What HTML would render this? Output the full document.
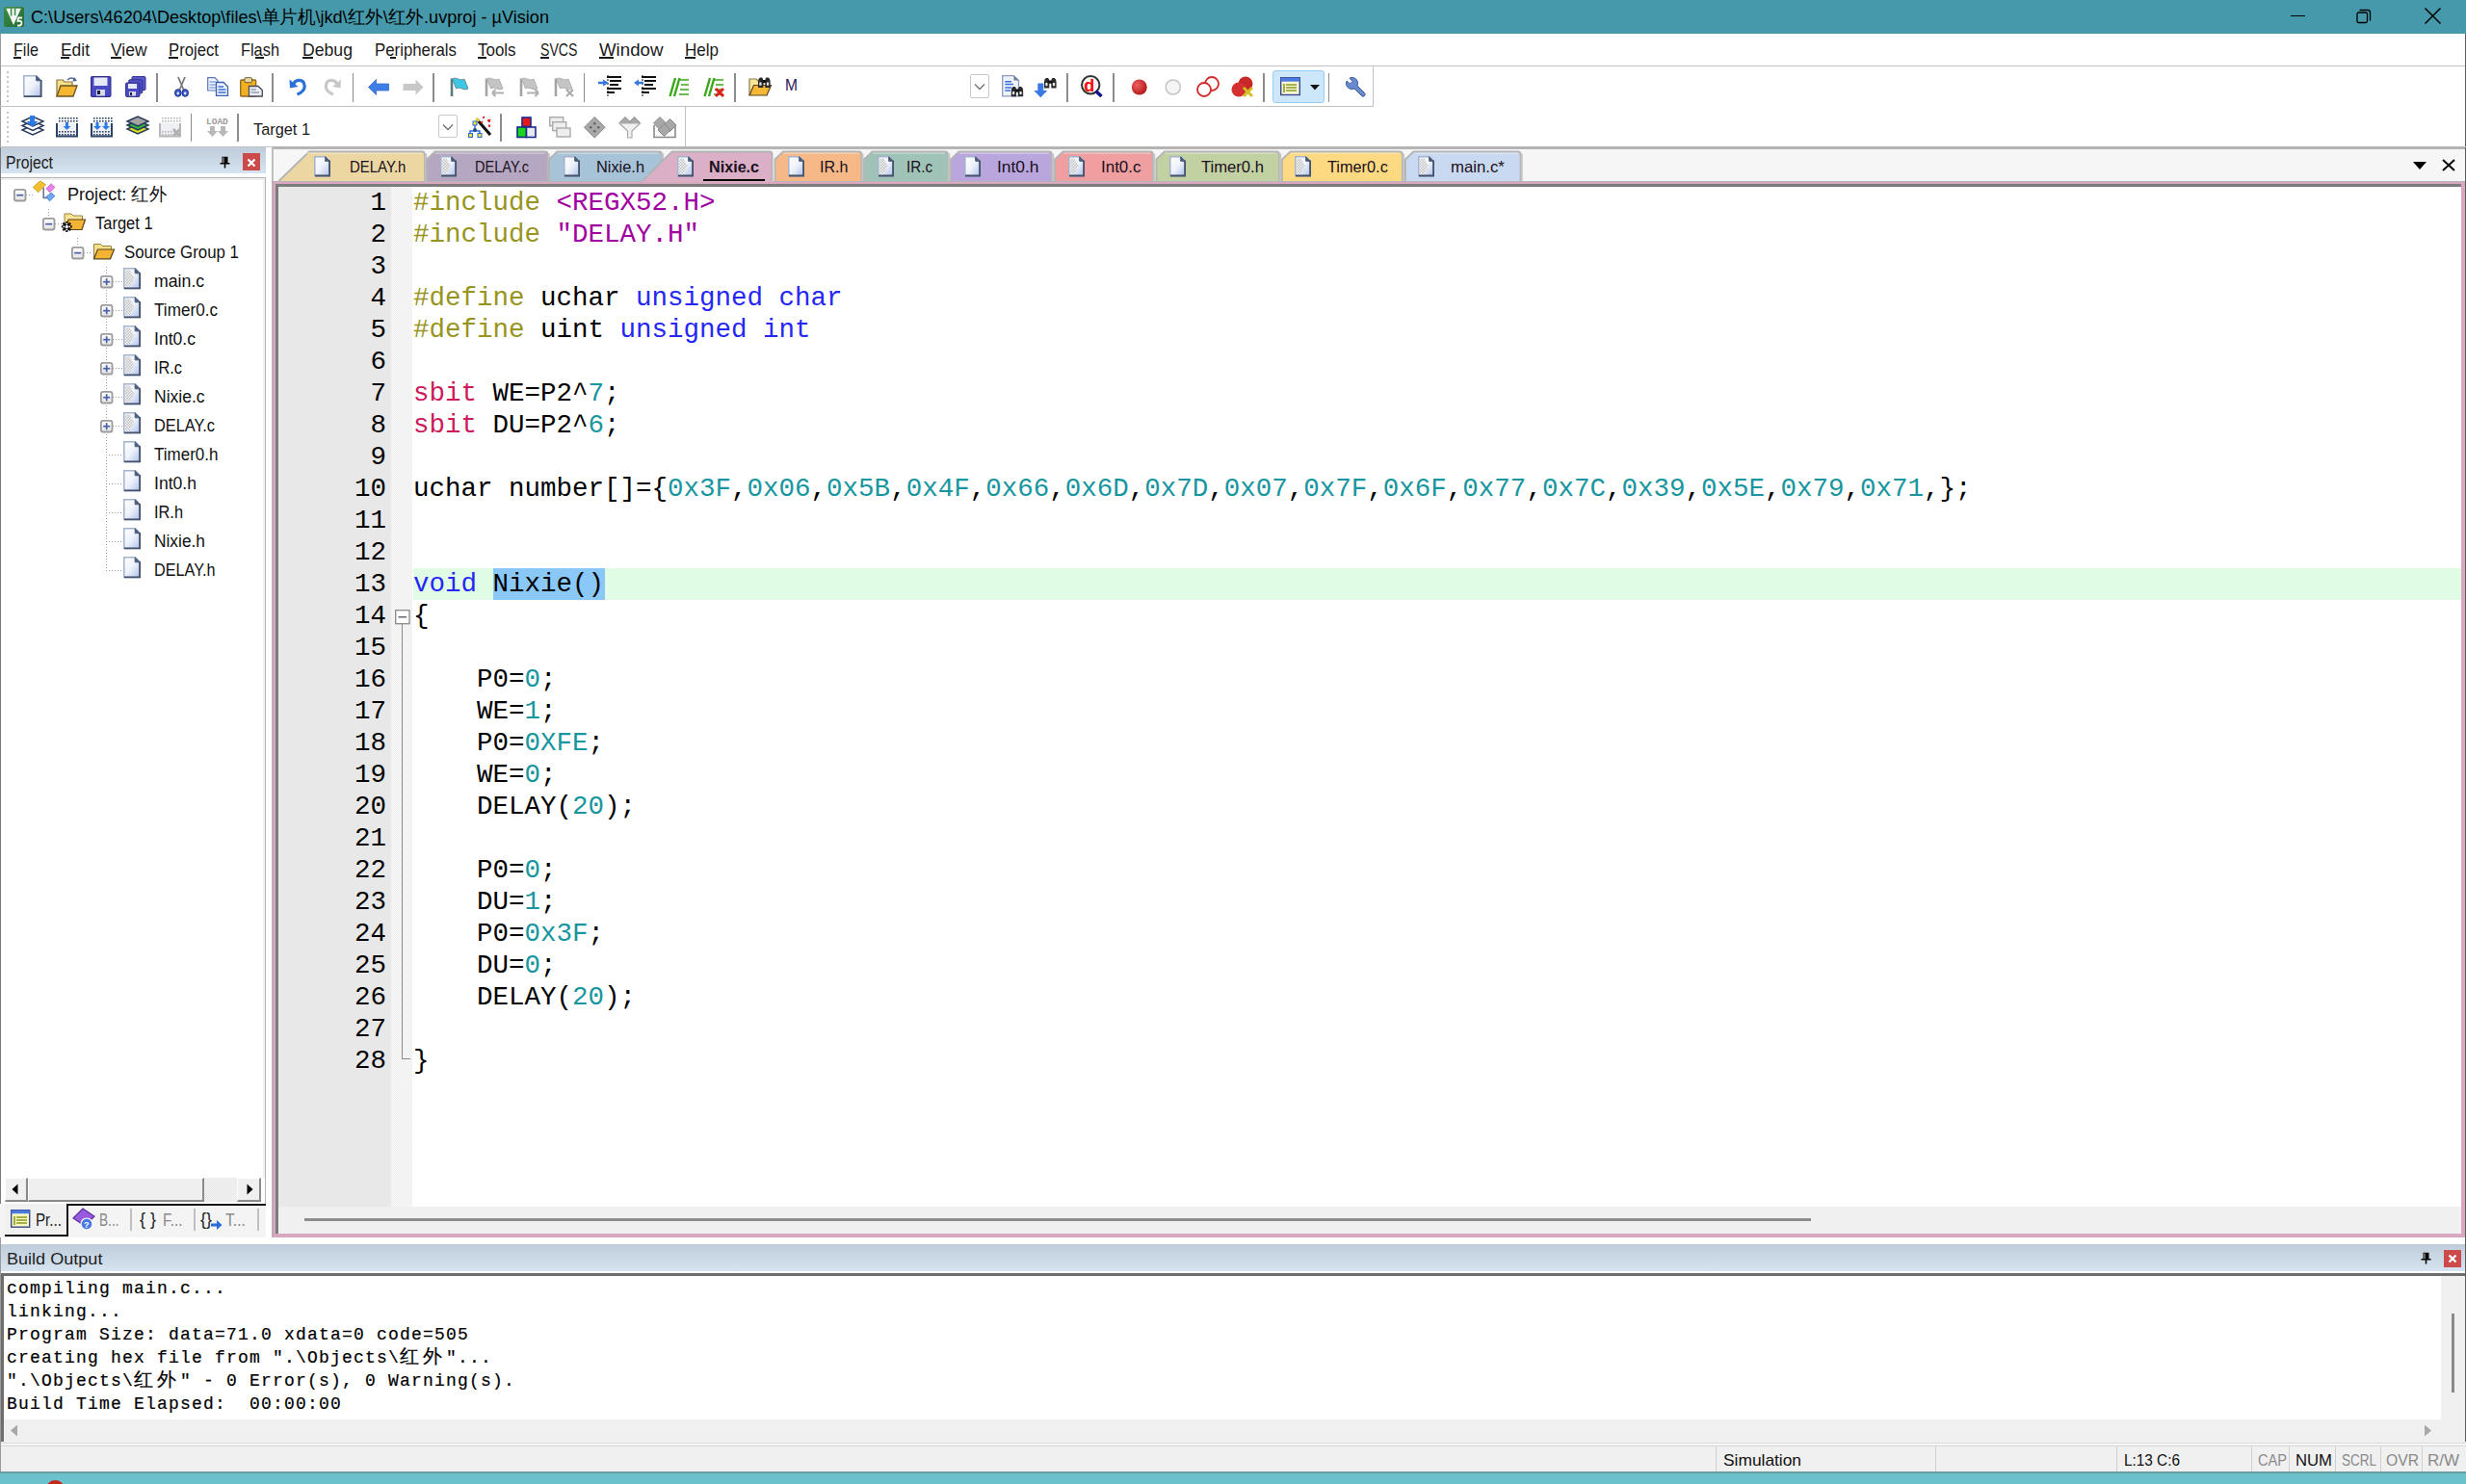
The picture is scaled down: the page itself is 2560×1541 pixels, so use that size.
<!DOCTYPE html><html><head><meta charset="utf-8"><style>
*{margin:0;padding:0;box-sizing:border-box}
html,body{width:2560px;height:1541px;overflow:hidden;background:#fff;font-family:"Liberation Sans",sans-serif;color:#000}
div,span,svg{position:absolute;display:block}
.t{white-space:nowrap}
.code{font-family:"Liberation Mono",monospace;font-size:27.5px;line-height:33px;white-space:pre}
.code div{position:absolute}
.ln{left:0;width:112px;text-align:right}
.cl{left:140px}
.code span{position:static;display:inline}
.kw{color:#2626f6}.pp{color:#989420}.st{color:#a000a0}.nu{color:#1896a0}.sb{color:#cc1a5c}
.bo{font-family:"Liberation Mono",monospace;font-size:18px;letter-spacing:1.2px;-webkit-text-stroke:0.2px #000;line-height:24px;white-space:pre;color:#000}
</style></head><body>
<div style="left:0px;top:0px;width:2560px;height:35px;background:#4599ab;"></div>
<svg style="left:3.6px;top:6.5px;overflow:visible" width="21" height="21" viewBox="0 0 21 21"><defs><linearGradient id="gapp" x1="0" y1="0" x2="1" y2="1"><stop offset="0" stop-color="#3e8c4a"/><stop offset="1" stop-color="#236c30"/></linearGradient></defs><rect x="0" y="0" width="21" height="21" rx="2" fill="url(#gapp)"/><path d="M2.3,1.8 H17.8 L10,19 Z" fill="#f4f8f4"/><path d="M7.6,1.5 V9.5 M11.6,1.5 V9" stroke="#3f8c4c" stroke-width="1.6"/><path d="M14.5,11.5 H19 M14.8,11.5 L14.5,15 Q18.5,14 18.5,17 Q18.5,20 14,19.5" fill="none" stroke="#fff" stroke-width="1.8"/></svg>
<span id="f0" class="t" style="left:32px;top:7px;font-size:18.5px;line-height:22px;color:#000;font-weight:normal;font-family:'Liberation Sans',sans-serif;transform:scaleX(0.9791);transform-origin:0 0;">C:\Users\46204\Desktop\files\单片机\jkd\红外\红外.uvproj - µVision</span>
<div style="left:2378px;top:16px;width:15px;height:1.3px;background:#000;"></div>
<svg style="left:2446px;top:9px;overflow:visible" width="16" height="16" viewBox="0 0 16 16"><path d="M3.5,1.5 H12 a2.5,2.5 0 0 1 2.5,2.5 V12.5" fill="none" stroke="#000" stroke-width="1.3"/><rect x="1" y="4" width="10.5" height="10.5" rx="1.5" fill="none" stroke="#000" stroke-width="1.3"/></svg>
<svg style="left:2516px;top:7px;overflow:visible" width="19" height="19" viewBox="0 0 19 19"><path d="M1.5,1.5 L17.5,17.5 M17.5,1.5 L1.5,17.5" stroke="#000" stroke-width="1.5"/></svg>
<span id="f1" class="t" style="left:14px;top:42px;font-size:18.5px;line-height:20px;color:#1a1a1a;font-weight:normal;font-family:'Liberation Sans',sans-serif;transform:scaleX(0.8721);transform-origin:0 0;">File</span>
<span id="f2" class="t" style="left:63px;top:42px;font-size:18.5px;line-height:20px;color:#1a1a1a;font-weight:normal;font-family:'Liberation Sans',sans-serif;transform:scaleX(0.9407);transform-origin:0 0;">Edit</span>
<span id="f3" class="t" style="left:115px;top:42px;font-size:18.5px;line-height:20px;color:#1a1a1a;font-weight:normal;font-family:'Liberation Sans',sans-serif;transform:scaleX(0.9430);transform-origin:0 0;">View</span>
<span id="f4" class="t" style="left:175px;top:42px;font-size:18.5px;line-height:20px;color:#1a1a1a;font-weight:normal;font-family:'Liberation Sans',sans-serif;transform:scaleX(0.9031);transform-origin:0 0;">Project</span>
<span id="f5" class="t" style="left:250px;top:42px;font-size:18.5px;line-height:20px;color:#1a1a1a;font-weight:normal;font-family:'Liberation Sans',sans-serif;transform:scaleX(0.8840);transform-origin:0 0;">Flash</span>
<span id="f6" class="t" style="left:314px;top:42px;font-size:18.5px;line-height:20px;color:#1a1a1a;font-weight:normal;font-family:'Liberation Sans',sans-serif;transform:scaleX(0.9539);transform-origin:0 0;">Debug</span>
<span id="f7" class="t" style="left:389px;top:42px;font-size:18.5px;line-height:20px;color:#1a1a1a;font-weight:normal;font-family:'Liberation Sans',sans-serif;transform:scaleX(0.9083);transform-origin:0 0;">Peripherals</span>
<span id="f8" class="t" style="left:496px;top:42px;font-size:18.5px;line-height:20px;color:#1a1a1a;font-weight:normal;font-family:'Liberation Sans',sans-serif;transform:scaleX(0.9166);transform-origin:0 0;">Tools</span>
<span id="f9" class="t" style="left:561px;top:42px;font-size:18.5px;line-height:20px;color:#1a1a1a;font-weight:normal;font-family:'Liberation Sans',sans-serif;transform:scaleX(0.7640);transform-origin:0 0;">SVCS</span>
<span id="f10" class="t" style="left:622px;top:42px;font-size:18.5px;line-height:20px;color:#1a1a1a;font-weight:normal;font-family:'Liberation Sans',sans-serif;transform:scaleX(1.0089);transform-origin:0 0;">Window</span>
<span id="f11" class="t" style="left:711px;top:42px;font-size:18.5px;line-height:20px;color:#1a1a1a;font-weight:normal;font-family:'Liberation Sans',sans-serif;transform:scaleX(0.9195);transform-origin:0 0;">Help</span>
<div style="left:14px;top:59px;width:8px;height:1.5px;background:#1a1a1a;"></div>
<div style="left:63px;top:59px;width:9px;height:1.5px;background:#1a1a1a;"></div>
<div style="left:115px;top:59px;width:11px;height:1.5px;background:#1a1a1a;"></div>
<div style="left:175px;top:59px;width:10px;height:1.5px;background:#1a1a1a;"></div>
<div style="left:265px;top:59px;width:9px;height:1.5px;background:#1a1a1a;"></div>
<div style="left:314px;top:59px;width:11px;height:1.5px;background:#1a1a1a;"></div>
<div style="left:405px;top:59px;width:6px;height:1.5px;background:#1a1a1a;"></div>
<div style="left:496px;top:59px;width:9px;height:1.5px;background:#1a1a1a;"></div>
<div style="left:561px;top:59px;width:9px;height:1.5px;background:#1a1a1a;"></div>
<div style="left:622px;top:59px;width:15px;height:1.5px;background:#1a1a1a;"></div>
<div style="left:711px;top:59px;width:11px;height:1.5px;background:#1a1a1a;"></div>
<div style="left:0px;top:68px;width:2560px;height:1px;background:#c2c2c2;"></div>
<div style="left:0px;top:35px;width:1px;height:1493px;background:#9a9a9a;"></div>
<div style="left:2559px;top:35px;width:1px;height:1493px;background:#5a5a5a;"></div>
<div style="left:0px;top:110px;width:1426px;height:1px;background:#c2c2c2;"></div>
<div style="left:1425px;top:69px;width:1px;height:42px;background:#c2c2c2;"></div>
<div style="left:711px;top:111px;width:1px;height:41px;background:#c2c2c2;"></div>
<div style="left:0px;top:152px;width:2560px;height:1px;background:#c2c2c2;"></div>
<div style="left:6.5px;top:74px;width:2.2px;height:2.2px;background:#c4c4c4;"></div>
<div style="left:6.5px;top:79px;width:2.2px;height:2.2px;background:#c4c4c4;"></div>
<div style="left:6.5px;top:84px;width:2.2px;height:2.2px;background:#c4c4c4;"></div>
<div style="left:6.5px;top:89px;width:2.2px;height:2.2px;background:#c4c4c4;"></div>
<div style="left:6.5px;top:94px;width:2.2px;height:2.2px;background:#c4c4c4;"></div>
<div style="left:6.5px;top:99px;width:2.2px;height:2.2px;background:#c4c4c4;"></div>
<div style="left:6.5px;top:104px;width:2.2px;height:2.2px;background:#c4c4c4;"></div>
<div style="left:6.5px;top:116px;width:2.2px;height:2.2px;background:#c4c4c4;"></div>
<div style="left:6.5px;top:121px;width:2.2px;height:2.2px;background:#c4c4c4;"></div>
<div style="left:6.5px;top:126px;width:2.2px;height:2.2px;background:#c4c4c4;"></div>
<div style="left:6.5px;top:131px;width:2.2px;height:2.2px;background:#c4c4c4;"></div>
<div style="left:6.5px;top:136px;width:2.2px;height:2.2px;background:#c4c4c4;"></div>
<div style="left:6.5px;top:141px;width:2.2px;height:2.2px;background:#c4c4c4;"></div>
<div style="left:6.5px;top:146px;width:2.2px;height:2.2px;background:#c4c4c4;"></div>
<div style="left:162.0px;top:75.5px;width:1.5px;height:30px;background:#8c8c8c;"></div>
<div style="left:282.1px;top:75.5px;width:1.5px;height:30px;background:#8c8c8c;"></div>
<div style="left:365.8px;top:75.5px;width:1.5px;height:30px;background:#8c8c8c;"></div>
<div style="left:449.3px;top:75.5px;width:1.5px;height:30px;background:#8c8c8c;"></div>
<div style="left:605.8px;top:75.5px;width:1.5px;height:30px;background:#8c8c8c;"></div>
<div style="left:762.3px;top:75.5px;width:1.5px;height:30px;background:#8c8c8c;"></div>
<div style="left:1107.3px;top:75.5px;width:1.5px;height:30px;background:#8c8c8c;"></div>
<div style="left:1155.0px;top:75.5px;width:1.5px;height:30px;background:#8c8c8c;"></div>
<div style="left:1311.3px;top:75.5px;width:1.5px;height:30px;background:#8c8c8c;"></div>
<div style="left:1378.6px;top:75.5px;width:1.5px;height:30px;background:#8c8c8c;"></div>
<div style="left:197.8px;top:118px;width:1.5px;height:29px;background:#8c8c8c;"></div>
<div style="left:246.0px;top:118px;width:1.5px;height:29px;background:#8c8c8c;"></div>
<div style="left:519.3px;top:118px;width:1.5px;height:29px;background:#8c8c8c;"></div>
<svg style="left:24px;top:78px;overflow:visible" width="19.5" height="23" viewBox="0 0 19.5 23"><defs><linearGradient id="i1" x1="0" y1="0" x2="1" y2="1"><stop offset="0" stop-color="#ffffff"/><stop offset="0.5" stop-color="#eef2fb"/><stop offset="1" stop-color="#aebfea"/></linearGradient></defs><path d="M0.8,0.8 H13.7 L18.7,5.8 V22.2 H0.8 Z" fill="url(#i1)" stroke="#a4b2cc" stroke-width="1.5"/><path d="M13.7,0.8 L18.7,5.8 H13.7 Z" fill="#4c5c7c" stroke="#4c5c7c" stroke-width="1"/><path d="M18.6,5 V22.1 H1" fill="none" stroke="#44526c" stroke-width="1.8"/></svg>
<svg style="left:57px;top:79px;overflow:visible" width="24" height="22" viewBox="0 0 24 22"><path d="M2,21 V4 h6 l2,2 h8 v3" fill="#f7e08a" stroke="#8c7440" stroke-width="1.2"/><path d="M2,21 L6,10 H23 L19,21 Z" fill="#f5b630" stroke="#6a5228" stroke-width="1.3"/><path d="M13,4 q4,-4 8,0" fill="none" stroke="#5a6ea0" stroke-width="1.6"/><path d="M20,1 L23,5 L18.5,5.5 Z" fill="#4a5e94"/></svg>
<svg style="left:94px;top:79px;overflow:visible" width="21.5" height="22" viewBox="0 0 21.5 22"><rect x="0.6" y="0.6" width="20.3" height="20.8" rx="1.2" fill="#4a4ac4" stroke="#2e2e88" stroke-width="1.2"/><rect x="3.5" y="1.5" width="14" height="8.5" fill="#e6eaf6"/><rect x="6" y="14" width="9" height="6.5" fill="#d6dae8"/><rect x="7" y="15" width="3" height="4" fill="#1a1a40"/></svg>
<svg style="left:130px;top:79px;overflow:visible" width="22" height="22" viewBox="0 0 22 22"><rect x="7" y="0.6" width="14" height="14" rx="1" fill="#5a5ad0" stroke="#2e2e88"/><rect x="3.8" y="3.8" width="14" height="14" rx="1" fill="#5252c8" stroke="#2e2e88"/><rect x="0.6" y="7" width="14.4" height="14.4" rx="1" fill="#4a4ac4" stroke="#2e2e88"/><rect x="3" y="8" width="9" height="5" fill="#e6eaf6"/><rect x="4" y="16" width="7" height="4.5" fill="#d6dae8"/><rect x="5" y="17" width="2" height="3" fill="#1a1a40"/></svg>
<svg style="left:181px;top:80px;overflow:visible" width="15" height="21" viewBox="0 0 15 21"><path d="M4,0 L9.5,13 M11,0 L5.5,13" stroke="#7a7a7a" stroke-width="1.8"/><ellipse cx="3.8" cy="16.5" rx="3.3" ry="3.8" fill="#3a5ac8" stroke="#1a3090"/><ellipse cx="11.2" cy="16.5" rx="3.3" ry="3.8" fill="#3a5ac8" stroke="#1a3090"/><ellipse cx="3.8" cy="16.8" rx="1.3" ry="1.6" fill="#dde"/><ellipse cx="11.2" cy="16.8" rx="1.3" ry="1.6" fill="#dde"/></svg>
<svg style="left:214.5px;top:80px;overflow:visible" width="23" height="20" viewBox="0 0 23 20"><path d="M0.7,0.7 H8 L11,3.7 V14 H0.7 Z" fill="#eef2fa" stroke="#5a78b8" stroke-width="1.2"/><path d="M2.5,5 H9 M2.5,8 H9 M2.5,11 H9" stroke="#5a84d0" stroke-width="1.2"/><path d="M9.5,5.5 H17 L21.5,10 V19.3 H9.5 Z" fill="#eef2fa" stroke="#3a60b0" stroke-width="1.3"/><path d="M11.5,10 H17 M11.5,13 H19.5 M11.5,16 H19.5" stroke="#3a70d0" stroke-width="1.4"/></svg>
<svg style="left:249px;top:80px;overflow:visible" width="24" height="20.5" viewBox="0 0 24 20.5"><rect x="0.7" y="3" width="16" height="17" rx="1" fill="#f0b020" stroke="#8a6a20" stroke-width="1.3"/><rect x="5" y="0.7" width="7.5" height="5" rx="1" fill="#e8d8a0" stroke="#6a5a30"/><path d="M9.5,9.5 H19 L23.3,13.5 V20 H9.5 Z" fill="#eceff6" stroke="#4a4a5a" stroke-width="1.3"/><path d="M11.5,13 H17 M11.5,16 H20" stroke="#6a7aa0" stroke-width="1.2"/></svg>
<svg style="left:299.6px;top:80px;overflow:visible" width="18.5" height="19.5" viewBox="0 0 18.5 19.5"><path d="M4.5,8 C6,2 15,1.5 16,8 C17,13 13,16.5 8.5,18" fill="none" stroke="#2a72d8" stroke-width="3.2"/><path d="M0.5,2.5 L1,11.5 L9.5,10 Z" fill="#2a72d8"/></svg>
<svg style="left:336px;top:80px;overflow:visible" width="18.5" height="19.5" viewBox="0 0 18.5 19.5"><path d="M14,8 C12.5,2 3.5,1.5 2.5,8 C1.5,13 5.5,16.5 10,18" fill="none" stroke="#c8c8c8" stroke-width="3.2"/><path d="M18,2.5 L17.5,11.5 L9,10 Z" fill="#c8c8c8"/></svg>
<svg style="left:382px;top:81.5px;overflow:visible" width="22" height="17" viewBox="0 0 22 17"><path d="M0.5,8.5 L8.5,0.5 V5 H21.5 V12 H8.5 V16.5 Z" fill="#3f7ee6" stroke="#3a6cc8" stroke-width="0.8"/></svg>
<svg style="left:418px;top:81.5px;overflow:visible" width="22" height="17" viewBox="0 0 22 17"><path d="M21.5,8.5 L13.5,0.5 V5 H0.5 V12 H13.5 V16.5 Z" fill="#c8c8c8"/></svg>
<svg style="left:466px;top:79.7px;overflow:visible" width="22" height="21" viewBox="0 0 22 21"><path d="M3,1.5 V20" stroke="#5a7a80" stroke-width="2.6"/><path d="M3.5,2 C8,-1 11,5 16,2 L20,12 C15,15 12,9 7.5,12 Z" fill="#3cc8e4" stroke="#5a7a80" stroke-width="0.8"/></svg>
<svg style="left:502px;top:79.7px;overflow:visible" width="22" height="21" viewBox="0 0 22 21"><path d="M3,1.5 V20" stroke="#a4a4a4" stroke-width="2.6"/><path d="M3.5,2 C8,-1 11,5 16,2 L20,12 C15,15 12,9 7.5,12 Z" fill="#c4c4c4" stroke="#a4a4a4" stroke-width="0.8"/><path d="M9,16.5 H21 M9,16.5 L12.5,13 M9,16.5 L12.5,20" stroke="#b0b0b0" stroke-width="2.2" fill="none"/></svg>
<svg style="left:538.4px;top:79.7px;overflow:visible" width="22" height="21" viewBox="0 0 22 21"><path d="M3,1.5 V20" stroke="#a4a4a4" stroke-width="2.6"/><path d="M3.5,2 C8,-1 11,5 16,2 L20,12 C15,15 12,9 7.5,12 Z" fill="#c4c4c4" stroke="#a4a4a4" stroke-width="0.8"/><path d="M9,16.5 H21 M21,16.5 L17.5,13 M21,16.5 L17.5,20" stroke="#b0b0b0" stroke-width="2.2" fill="none"/></svg>
<svg style="left:574px;top:79.7px;overflow:visible" width="22" height="21" viewBox="0 0 22 21"><path d="M3,1.5 V20" stroke="#a4a4a4" stroke-width="2.6"/><path d="M3.5,2 C8,-1 11,5 16,2 L20,12 C15,15 12,9 7.5,12 Z" fill="#c4c4c4" stroke="#a4a4a4" stroke-width="0.8"/><path d="M14,13 L21,20 M21,13 L14,20" stroke="#a8a8a8" stroke-width="2" fill="none"/></svg>
<svg style="left:621px;top:78px;overflow:visible" width="24.5" height="23" viewBox="0 0 24.5 23"><path d="M9,2 H24 M12,6 H24 M12,10 H21 M9,14 H24 M9,18 H17" stroke="#111" stroke-width="2.2"/><path d="M10,0 V23" stroke="#111" stroke-width="1" stroke-dasharray="2,2"/><path d="M11,8 L5,4.5 V6.8 H0 V9.2 H5 V11.5 Z" fill="#3a78e0"/></svg>
<svg style="left:657px;top:78px;overflow:visible" width="24.5" height="23" viewBox="0 0 24.5 23"><path d="M9,2 H24 M12,6 H24 M12,10 H21 M9,14 H24 M9,18 H17" stroke="#111" stroke-width="2.2"/><path d="M10,0 V23" stroke="#111" stroke-width="1" stroke-dasharray="2,2"/><path d="M1,8 L6,4.5 V6.8 H11 V9.2 H6 V11.5 Z" fill="#3a78e0"/></svg>
<svg style="left:694px;top:79px;overflow:visible" width="22.5" height="22" viewBox="0 0 22.5 22"><path d="M1.5,21 L7,2 M6,21 L11.5,2" stroke="#3aa818" stroke-width="2.4"/><path d="M12,4 H21 M13,9 H21 M12,14 H21 M11,19 H21" stroke="#3aa818" stroke-width="1.6"/></svg>
<svg style="left:729.8px;top:79px;overflow:visible" width="22.5" height="22" viewBox="0 0 22.5 22"><path d="M1.5,21 L7,2 M6,21 L11.5,2" stroke="#3aa818" stroke-width="2.4"/><path d="M12,4 H21 M13,9 H21 M12,14 H21 M11,19 H21" stroke="#3aa818" stroke-width="1.6"/><path d="M13,13 L21,21 M21,13 L13,21" stroke="#e02020" stroke-width="3"/></svg>
<svg style="left:777px;top:79px;overflow:visible" width="25" height="21" viewBox="0 0 25 21"><path d="M1,20 V3 h7 l2,2 h5 v6" fill="#f6e796" stroke="#8c7c50" stroke-width="1.2"/><path d="M1,20 L5.5,9.5 H23.5 L19,20 Z" fill="#f4b836" stroke="#5a4420" stroke-width="1.2"/><g transform="translate(9.5,1) scale(1.0)"><path d="M0.5,11 V4.5 Q0.5,1.5 2.5,0.5 H4.5 Q5.8,1.5 5.8,3.5 V11 Z" fill="#2a2a2a"/><path d="M7.8,11 V3.5 Q7.8,1.5 9.1,0.5 H11.1 Q13.1,1.5 13.1,4.5 V11 Z" fill="#2a2a2a"/><rect x="5" y="3" width="3.6" height="3.2" fill="#111"/><rect x="1.8" y="5.5" width="2.2" height="3.2" fill="#e8e8e8"/><rect x="9.4" y="5.5" width="2.2" height="3.2" fill="#e8e8e8"/></g></svg>
<span id="f12" class="t" style="left:815px;top:81px;font-size:17px;line-height:16px;color:#2a1a5a;font-weight:normal;font-family:'Liberation Sans',sans-serif;transform:scaleX(0.9173);transform-origin:0 0;">M</span>
<div style="left:1007.3px;top:77.3px;width:20.1px;height:25px;background:#fff;border:1px solid #c8c8c8;border-radius:2px"></div>
<svg style="left:1011px;top:86px;overflow:visible" width="12" height="8" viewBox="0 0 12 8"><path d="M1,1.5 L6,6.5 L11,1.5" fill="none" stroke="#707070" stroke-width="1.3"/></svg>
<svg style="left:1039.7px;top:78.4px;overflow:visible" width="23" height="22.6" viewBox="0 0 23 22.6"><path d="M0.7,0.7 H12.5 L17.5,5.5 V21.9 H0.7 Z" fill="#eef2fb" stroke="#8a9ab8" stroke-width="1.3"/><path d="M12.5,0.7 L17.5,5.5 H12.5 Z" fill="#6a7a98"/><path d="M3.3,6.8 H10 M3.3,9.6 H12 M3.3,12.9 H10 M3.3,15.9 H9" stroke="#3a6ee0" stroke-width="1.5"/><g transform="translate(9.3,11.6) scale(0.98)"><path d="M0.5,11 V4.5 Q0.5,1.5 2.5,0.5 H4.5 Q5.8,1.5 5.8,3.5 V11 Z" fill="#2a2a2a"/><path d="M7.8,11 V3.5 Q7.8,1.5 9.1,0.5 H11.1 Q13.1,1.5 13.1,4.5 V11 Z" fill="#2a2a2a"/><rect x="5" y="3" width="3.6" height="3.2" fill="#111"/><rect x="1.8" y="5.5" width="2.2" height="3.2" fill="#e8e8e8"/><rect x="9.4" y="5.5" width="2.2" height="3.2" fill="#e8e8e8"/></g></svg>
<svg style="left:1074px;top:79.5px;overflow:visible" width="24" height="22" viewBox="0 0 24 22"><path d="M3.3,6.5 H9.3 V14 H13.3 L6.3,21.3 L-0.7,14 H3.3 Z" fill="#3a78e4"/><g transform="translate(9.5,0.5) scale(1.0)"><path d="M0.5,11 V4.5 Q0.5,1.5 2.5,0.5 H4.5 Q5.8,1.5 5.8,3.5 V11 Z" fill="#2a2a2a"/><path d="M7.8,11 V3.5 Q7.8,1.5 9.1,0.5 H11.1 Q13.1,1.5 13.1,4.5 V11 Z" fill="#2a2a2a"/><rect x="5" y="3" width="3.6" height="3.2" fill="#111"/><rect x="1.8" y="5.5" width="2.2" height="3.2" fill="#e8e8e8"/><rect x="9.4" y="5.5" width="2.2" height="3.2" fill="#e8e8e8"/></g></svg>
<svg style="left:1122px;top:78.4px;overflow:visible" width="23" height="23" viewBox="0 0 23 23"><circle cx="10.2" cy="10.3" r="9.2" fill="#f4f4f4" stroke="#333" stroke-width="2"/><text x="3.2" y="16.5" font-family="Liberation Sans" font-weight="bold" font-size="18" fill="#ff0000">d</text><path d="M15.5,16.5 L21.5,22" stroke="#10108a" stroke-width="3.6"/></svg>
<svg style="left:1173.5px;top:82px;overflow:visible" width="17.5" height="17" viewBox="0 0 17.5 17"><defs><radialGradient id="gbp" cx="0.35" cy="0.35" r="0.7"><stop offset="0" stop-color="#f06060"/><stop offset="1" stop-color="#b01818"/></radialGradient></defs><circle cx="8.75" cy="8.5" r="8" fill="url(#gbp)"/></svg>
<svg style="left:1209.2px;top:82px;overflow:visible" width="17.5" height="17" viewBox="0 0 17.5 17"><circle cx="8.75" cy="8.5" r="7.6" fill="#f4f4f4" stroke="#c4c4c4" stroke-width="1.5"/></svg>
<svg style="left:1242.4px;top:78.7px;overflow:visible" width="24" height="22" viewBox="0 0 24 22"><circle cx="16" cy="8" r="7" fill="#fff" stroke="#d02a2a" stroke-width="1.8"/><circle cx="8" cy="14" r="7" fill="#fff" stroke="#d02a2a" stroke-width="1.8"/></svg>
<svg style="left:1278px;top:78.7px;overflow:visible" width="24.5" height="22" viewBox="0 0 24.5 22"><circle cx="15" cy="8" r="7.5" fill="#c82828"/><circle cx="8" cy="14" r="7.5" fill="#d43030"/><path d="M13,12 L22,21 M22,12 L13,21" stroke="#d4c020" stroke-width="3"/></svg>
<div style="left:1320.5px;top:73px;width:54.4px;height:33.6px;background:#cce6fa;border:1.5px solid #98ccf4;border-radius:3px"></div>
<svg style="left:1328.7px;top:79.6px;overflow:visible" width="21" height="19.2" viewBox="0 0 21 19.2"><rect x="0.7" y="0.7" width="19.6" height="17.8" fill="#f8f8d8" stroke="#3a4a8a" stroke-width="1.4"/><rect x="0.7" y="0.7" width="19.6" height="4" fill="#4a7ae0"/><path d="M4,7 V16 M6,8 H17 M6,11 H17 M6,14 H17" stroke="#8a9a20" stroke-width="1.6"/></svg>
<svg style="left:1359.5px;top:88px;overflow:visible" width="10" height="6" viewBox="0 0 10 6"><path d="M0,0 H10 L5,5.5 Z" fill="#111"/></svg>
<svg style="left:1395px;top:78.7px;overflow:visible" width="22" height="22" viewBox="0 0 22 22"><path d="M3,5 a6,6 0 0 0 8,8 L18.5,20.5 a2,2 0 0 0 3,-3 L14,10 a6,6 0 0 0 -8,-8 L9,5.5 L6.5,8 Z" fill="#6a8ad0" stroke="#3a5a9a" stroke-width="1"/></svg>
<svg style="left:22px;top:120px;overflow:visible" width="23.5" height="23" viewBox="0 0 23.5 23"><path d="M1,15.0 L12,10.0 L23,15.0 L12,20.0 Z" fill="#fff" stroke="#26385a" stroke-width="1.4"/><path d="M1,10.5 L12,5.5 L23,10.5 L12,15.5 Z" fill="#fff" stroke="#26385a" stroke-width="1.4"/><path d="M1,6.0 L12,1.0 L23,6.0 L12,11.0 Z" fill="#fff" stroke="#26385a" stroke-width="1.4"/><path d="M9,0 H14 V6 H17.5 L11.5,12 L5.5,6 H9 Z" fill="#2a7ae8"/></svg>
<svg style="left:58.4px;top:120px;overflow:visible" width="23" height="22" viewBox="0 0 23 22"><path d="M1,8 V21.5 H22 V8" fill="#eef0f6" stroke="#2e4466" stroke-width="2"/><rect x="3" y="2" width="1.6" height="1.6" fill="#2e4466"/><rect x="6" y="2" width="1.6" height="1.6" fill="#2e4466"/><rect x="9" y="2" width="1.6" height="1.6" fill="#2e4466"/><rect x="12" y="2" width="1.6" height="1.6" fill="#2e4466"/><rect x="15" y="2" width="1.6" height="1.6" fill="#2e4466"/><rect x="18" y="2" width="1.6" height="1.6" fill="#2e4466"/><rect x="21" y="2" width="1.6" height="1.6" fill="#2e4466"/><rect x="3" y="5" width="1.6" height="1.6" fill="#2e4466"/><rect x="6" y="5" width="1.6" height="1.6" fill="#2e4466"/><rect x="9" y="5" width="1.6" height="1.6" fill="#2e4466"/><rect x="12" y="5" width="1.6" height="1.6" fill="#2e4466"/><rect x="15" y="5" width="1.6" height="1.6" fill="#2e4466"/><rect x="18" y="5" width="1.6" height="1.6" fill="#2e4466"/><rect x="21" y="5" width="1.6" height="1.6" fill="#2e4466"/><rect x="3" y="16" width="1.6" height="1.6" fill="#2e4466"/><rect x="6" y="16" width="1.6" height="1.6" fill="#2e4466"/><rect x="9" y="16" width="1.6" height="1.6" fill="#2e4466"/><rect x="12" y="16" width="1.6" height="1.6" fill="#2e4466"/><rect x="15" y="16" width="1.6" height="1.6" fill="#2e4466"/><rect x="18" y="16" width="1.6" height="1.6" fill="#2e4466"/><rect x="21" y="16" width="1.6" height="1.6" fill="#2e4466"/><rect x="3" y="19" width="1.6" height="1.6" fill="#2e4466"/><rect x="6" y="19" width="1.6" height="1.6" fill="#2e4466"/><rect x="9" y="19" width="1.6" height="1.6" fill="#2e4466"/><rect x="12" y="19" width="1.6" height="1.6" fill="#2e4466"/><rect x="15" y="19" width="1.6" height="1.6" fill="#2e4466"/><rect x="18" y="19" width="1.6" height="1.6" fill="#2e4466"/><rect x="21" y="19" width="1.6" height="1.6" fill="#2e4466"/><path d="M10.0,7 H13.0 V11 H15.5 L11.5,15 L7.5,11 H10.0 Z" fill="#2a7ae8"/></svg>
<svg style="left:94.2px;top:120px;overflow:visible" width="23" height="22" viewBox="0 0 23 22"><path d="M1,8 V21.5 H22 V8" fill="#eef0f6" stroke="#2e4466" stroke-width="2"/><rect x="3" y="2" width="1.6" height="1.6" fill="#2e4466"/><rect x="6" y="2" width="1.6" height="1.6" fill="#2e4466"/><rect x="9" y="2" width="1.6" height="1.6" fill="#2e4466"/><rect x="12" y="2" width="1.6" height="1.6" fill="#2e4466"/><rect x="15" y="2" width="1.6" height="1.6" fill="#2e4466"/><rect x="18" y="2" width="1.6" height="1.6" fill="#2e4466"/><rect x="21" y="2" width="1.6" height="1.6" fill="#2e4466"/><rect x="3" y="5" width="1.6" height="1.6" fill="#2e4466"/><rect x="6" y="5" width="1.6" height="1.6" fill="#2e4466"/><rect x="9" y="5" width="1.6" height="1.6" fill="#2e4466"/><rect x="12" y="5" width="1.6" height="1.6" fill="#2e4466"/><rect x="15" y="5" width="1.6" height="1.6" fill="#2e4466"/><rect x="18" y="5" width="1.6" height="1.6" fill="#2e4466"/><rect x="21" y="5" width="1.6" height="1.6" fill="#2e4466"/><rect x="3" y="16" width="1.6" height="1.6" fill="#2e4466"/><rect x="6" y="16" width="1.6" height="1.6" fill="#2e4466"/><rect x="9" y="16" width="1.6" height="1.6" fill="#2e4466"/><rect x="12" y="16" width="1.6" height="1.6" fill="#2e4466"/><rect x="15" y="16" width="1.6" height="1.6" fill="#2e4466"/><rect x="18" y="16" width="1.6" height="1.6" fill="#2e4466"/><rect x="21" y="16" width="1.6" height="1.6" fill="#2e4466"/><rect x="3" y="19" width="1.6" height="1.6" fill="#2e4466"/><rect x="6" y="19" width="1.6" height="1.6" fill="#2e4466"/><rect x="9" y="19" width="1.6" height="1.6" fill="#2e4466"/><rect x="12" y="19" width="1.6" height="1.6" fill="#2e4466"/><rect x="15" y="19" width="1.6" height="1.6" fill="#2e4466"/><rect x="18" y="19" width="1.6" height="1.6" fill="#2e4466"/><rect x="21" y="19" width="1.6" height="1.6" fill="#2e4466"/><path d="M5.5,7 H8.5 V11 H11 L7,15 L3,11 H5.5 Z" fill="#2a7ae8"/><path d="M14.5,7 H17.5 V11 H20 L16,15 L12,11 H14.5 Z" fill="#2a7ae8"/></svg>
<svg style="left:130.7px;top:120px;overflow:visible" width="23" height="23" viewBox="0 0 23 23"><path d="M1,14 L12,9 L23,14 L12,19 Z" fill="#d8e020" stroke="#26385a" stroke-width="1.4"/><path d="M1,10 L12,5 L23,10 L12,15 Z" fill="#30b040" stroke="#26385a" stroke-width="1.4"/><path d="M1,6 L12,1 L23,6 L12,11 Z" fill="#a4a4a4" stroke="#26385a" stroke-width="1.4"/></svg>
<svg style="left:165px;top:120px;overflow:visible" width="24" height="23" viewBox="0 0 24 23"><path d="M1,8 V21.5 H22 V8" fill="#eef0f6" stroke="#b8b8b8" stroke-width="2"/><rect x="3" y="2" width="1.6" height="1.6" fill="#b8b8b8"/><rect x="6" y="2" width="1.6" height="1.6" fill="#b8b8b8"/><rect x="9" y="2" width="1.6" height="1.6" fill="#b8b8b8"/><rect x="12" y="2" width="1.6" height="1.6" fill="#b8b8b8"/><rect x="15" y="2" width="1.6" height="1.6" fill="#b8b8b8"/><rect x="18" y="2" width="1.6" height="1.6" fill="#b8b8b8"/><rect x="21" y="2" width="1.6" height="1.6" fill="#b8b8b8"/><rect x="3" y="5" width="1.6" height="1.6" fill="#b8b8b8"/><rect x="6" y="5" width="1.6" height="1.6" fill="#b8b8b8"/><rect x="9" y="5" width="1.6" height="1.6" fill="#b8b8b8"/><rect x="12" y="5" width="1.6" height="1.6" fill="#b8b8b8"/><rect x="15" y="5" width="1.6" height="1.6" fill="#b8b8b8"/><rect x="18" y="5" width="1.6" height="1.6" fill="#b8b8b8"/><rect x="21" y="5" width="1.6" height="1.6" fill="#b8b8b8"/><rect x="3" y="16" width="1.6" height="1.6" fill="#b8b8b8"/><rect x="6" y="16" width="1.6" height="1.6" fill="#b8b8b8"/><rect x="9" y="16" width="1.6" height="1.6" fill="#b8b8b8"/><rect x="12" y="16" width="1.6" height="1.6" fill="#b8b8b8"/><rect x="15" y="16" width="1.6" height="1.6" fill="#b8b8b8"/><rect x="18" y="16" width="1.6" height="1.6" fill="#b8b8b8"/><rect x="21" y="16" width="1.6" height="1.6" fill="#b8b8b8"/><rect x="3" y="19" width="1.6" height="1.6" fill="#b8b8b8"/><rect x="6" y="19" width="1.6" height="1.6" fill="#b8b8b8"/><rect x="9" y="19" width="1.6" height="1.6" fill="#b8b8b8"/><rect x="12" y="19" width="1.6" height="1.6" fill="#b8b8b8"/><rect x="15" y="19" width="1.6" height="1.6" fill="#b8b8b8"/><rect x="18" y="19" width="1.6" height="1.6" fill="#b8b8b8"/><rect x="21" y="19" width="1.6" height="1.6" fill="#b8b8b8"/><path d="M15,14 L22,21 M22,14 L15,21" stroke="#b0b0b0" stroke-width="2.5"/></svg>
<svg style="left:214px;top:121px;overflow:visible" width="23.5" height="22" viewBox="0 0 23.5 22"><text x="0" y="8" font-family="Liberation Mono" font-size="9.5" font-weight="bold" fill="#9a9a9a">LOAD</text><path d="M4,10 H9 V15 H12 L6.5,21 L1,15 H4 Z M15,10 H20 V15 H23 L17.5,21 L12,15 H15 Z" fill="#b8b8b8"/></svg>
<span id="f13" class="t" style="left:263px;top:125px;font-size:16.3px;line-height:18px;color:#1a1a1a;font-weight:normal;font-family:'Liberation Sans',sans-serif;transform:scaleX(1.0029);transform-origin:0 0;">Target 1</span>
<div style="left:455.3px;top:119.4px;width:19.4px;height:24.1px;background:#fff;border:1px solid #c8c8c8;border-radius:2px"></div>
<svg style="left:459px;top:128px;overflow:visible" width="12" height="8" viewBox="0 0 12 8"><path d="M1,1.5 L6,6.5 L11,1.5" fill="none" stroke="#707070" stroke-width="1.3"/></svg>
<svg style="left:486px;top:120px;overflow:visible" width="25" height="23" viewBox="0 0 25 23"><path d="M9,4 L23,20" stroke="#111" stroke-width="3"/><path d="M8,3 L11,6" stroke="#e8d040" stroke-width="3"/><path d="M15,2 l2,-1 l-1,2 Z M20,5 l3,-1 l-1,3 Z M13,7 l2,-1 l-1,2Z M21,10 l2,0 l-1,2Z" fill="#e02020" stroke="#e02020"/><path d="M7,8 V14 M2,20 V16 H12 V20 M7,14 V16" stroke="#2a6ad8" stroke-width="1.4" fill="none"/><rect x="5" y="6" width="4" height="4" fill="#f0e040" stroke="#2a6ad8"/><rect x="0.5" y="18.5" width="4" height="4" fill="#f0e040" stroke="#2a6ad8"/><rect x="10" y="18.5" width="4" height="4" fill="#f0e040" stroke="#2a6ad8"/><circle cx="7" cy="15" r="2" fill="#2a4a90"/></svg>
<svg style="left:535.8px;top:120.6px;overflow:visible" width="21" height="22.4" viewBox="0 0 21 22.4"><rect x="6" y="1" width="9" height="9.5" fill="#e81818" stroke="#1a2a8a" stroke-width="1.6"/><rect x="1" y="11" width="9.5" height="10.5" fill="#18d818" stroke="#1a2a8a" stroke-width="1.6"/><rect x="10.5" y="11" width="9.5" height="10.5" fill="#e8e8ee" stroke="#1a2a8a" stroke-width="1.6"/></svg>
<svg style="left:570px;top:121px;overflow:visible" width="23" height="22" viewBox="0 0 23 22"><rect x="0.7" y="0.7" width="14" height="9" fill="#eee" stroke="#aaa" stroke-width="1.4"/><rect x="3.7" y="5.7" width="14" height="9" fill="#eee" stroke="#aaa" stroke-width="1.4"/><rect x="8" y="12" width="14" height="9" fill="#eee" stroke="#aaa" stroke-width="1.4"/></svg>
<svg style="left:606.4px;top:120.6px;overflow:visible" width="22.5" height="22.5" viewBox="0 0 22.5 22.5"><path d="M11.25,0.4499999999999993 L22.05,11.25 L11.25,22.05 L0.4499999999999993,11.25 Z" fill="#a8a8a8" stroke="#8a8a8a" stroke-width="1"/><circle cx="7.25" cy="11.25" r="1.3" fill="#666"/><circle cx="15.25" cy="11.25" r="1.3" fill="#666"/><circle cx="11.25" cy="7.25" r="1.3" fill="#666"/><circle cx="11.25" cy="15.25" r="1.3" fill="#666"/></svg>
<svg style="left:641.7px;top:120.6px;overflow:visible" width="23.5" height="22.5" viewBox="0 0 23.5 22.5"><path d="M7,0.5 L12.5,6 L7,11.5 L1.5,6 Z" fill="#a8a8a8" stroke="#8a8a8a" stroke-width="1"/><path d="M16.5,0.5 L22.0,6 L16.5,11.5 L11.0,6 Z" fill="#a8a8a8" stroke="#8a8a8a" stroke-width="1"/><path d="M1,7 H22.5 L14,15 V22 H9.5 V15 Z" fill="#f0f0f0" stroke="#aaa" stroke-width="1.2"/></svg>
<svg style="left:678px;top:120.6px;overflow:visible" width="24.3" height="22.5" viewBox="0 0 24.3 22.5"><path d="M1,9 V21.5 H23 V9" fill="#fafafa" stroke="#8a8a8a" stroke-width="1.6"/><path d="M7,0.5 L13.5,7 L7,13.5 L0.5,7 Z" fill="#a8a8a8" stroke="#8a8a8a" stroke-width="1"/><path d="M17.5,2.5 L24.0,9 L17.5,15.5 L11.0,9 Z" fill="#a8a8a8" stroke="#8a8a8a" stroke-width="1"/><path d="M11.5,7.5 L18.0,14 L11.5,20.5 L5.0,14 Z" fill="#a8a8a8" stroke="#8a8a8a" stroke-width="1"/></svg>
<div style="left:0px;top:153px;width:276px;height:27px;background:linear-gradient(#bfcddb,#d6e4f1);"></div>
<span id="f14" class="t" style="left:6px;top:158.5px;font-size:18px;line-height:20px;color:#1e1e1e;font-weight:normal;font-family:'Liberation Sans',sans-serif;transform:scaleX(0.8745);transform-origin:0 0;">Project</span>
<svg style="left:228px;top:162px;overflow:visible" width="11" height="13" viewBox="0 0 11 13"><path d="M2.5,0.8 H8.5 V7 H10.5 V8.6 H0.5 V7 H2.5 Z" fill="#000"/><path d="M5.5,8 V12.5" stroke="#000" stroke-width="1.6"/><path d="M4,1.5 V7" stroke="#fff" stroke-width="0.8"/></svg>
<div style="left:252px;top:159.4px;width:18px;height:18px;background:#cc4a4a;"></div>
<svg style="left:255px;top:162.5px;overflow:visible" width="12" height="12" viewBox="0 0 12 12"><path d="M2.5,2.5 L9.5,9.5 M9.5,2.5 L2.5,9.5" stroke="#fff" stroke-width="2.2"/></svg>
<div style="left:276px;top:153px;width:6px;height:1132px;background:#fff;"></div>
<div style="left:282px;top:153px;width:1px;height:1132px;background:#b8b8b8;"></div>
<div style="left:0px;top:184px;width:276px;height:1066px;background:#fff;border-top:1px solid #b4b4b4;border-right:1px solid #b4b4b4"></div>
<div style="left:1px;top:185px;width:274px;height:1.5px;background:#f0f0f0;"></div>
<div style="left:273px;top:185px;width:1.5px;height:1038px;background:#f0f0f0;"></div>
<svg style="left:13.7px;top:195.8px;overflow:visible" width="13.4" height="13.4" viewBox="0 0 13.4 13.4"><defs><linearGradient id="gbx" x1="0" y1="0" x2="0" y2="1"><stop offset="0" stop-color="#fdfdfd"/><stop offset="1" stop-color="#e4e4e4"/></linearGradient></defs><rect x="0.9" y="0.9" width="11.6" height="11.6" rx="2" fill="url(#gbx)" stroke="#9c9c9c" stroke-width="1.8"/><path d="M3.2,6.7 H10.2" stroke="#4a60a8" stroke-width="1.7"/></svg>
<div style="left:27px;top:202px;width:9px;height:1px;background:repeating-linear-gradient(90deg,#a0a0a0 0 1px,transparent 1px 3px);"></div>
<svg style="left:34px;top:187px;overflow:visible" width="24" height="23" viewBox="0 0 24 23"><path d="M11.2,7.5 V18.4 H15" stroke="#6a7a94" stroke-width="1.6" fill="none"/><path d="M0.2,7.5 L7.7,0.8 L13.6,4.7 L5.7,12.8 Z" fill="#f0c030" stroke="#c89a20" stroke-width="0.8"/><path d="M14,8.7 L19.2,3.9 L22.9,7.5 L17.6,12.6 Z" fill="#ec80ec" stroke="#c050c0" stroke-width="0.8"/><path d="M14,17.4 L19.2,13 L22.9,16.6 L17.6,21.8 Z" fill="#70a8f0" stroke="#3a70d0" stroke-width="0.8"/></svg>
<span id="f15" class="t" style="left:69.6px;top:192px;font-size:18.7px;line-height:20px;color:#111;font-weight:normal;font-family:'Liberation Sans',sans-serif;transform:scaleX(0.9667);transform-origin:0 0;">Project: 红外</span>
<div style="left:50px;top:217px;width:1px;height:9px;background:repeating-linear-gradient(180deg,#a0a0a0 0 1px,transparent 1px 3px);"></div>
<svg style="left:43.8px;top:225.9px;overflow:visible" width="13.4" height="13.4" viewBox="0 0 13.4 13.4"><defs><linearGradient id="gbx" x1="0" y1="0" x2="0" y2="1"><stop offset="0" stop-color="#fdfdfd"/><stop offset="1" stop-color="#e4e4e4"/></linearGradient></defs><rect x="0.9" y="0.9" width="11.6" height="11.6" rx="2" fill="url(#gbx)" stroke="#9c9c9c" stroke-width="1.8"/><path d="M3.2,6.7 H10.2" stroke="#4a60a8" stroke-width="1.7"/></svg>
<div style="left:57px;top:232px;width:7px;height:1px;background:repeating-linear-gradient(90deg,#a0a0a0 0 1px,transparent 1px 3px);"></div>
<svg style="left:64px;top:221px;overflow:visible" width="25" height="20" viewBox="0 0 25 20"><path d="M3,16 V1 h7 l2,2 h9.5 v5" fill="#f7e494" stroke="#9a8040" stroke-width="1"/><path d="M3.5,17.5 L7,7 H24.5 L21,17.5 Z" fill="#f2b432" stroke="#5a4420" stroke-width="1.2"/><g transform="translate(5.3,14.4)"><circle r="4.2" fill="#111"/><path d="M0,-5.5 V5.5 M-5.5,0 H5.5 M-3.9,-3.9 L3.9,3.9 M3.9,-3.9 L-3.9,3.9" stroke="#111" stroke-width="2.2"/><circle r="1.6" fill="#fff"/><circle cx="0" cy="-3" r="0.9" fill="#fff"/><circle cx="0" cy="3" r="0.9" fill="#fff"/><circle cx="3" cy="0" r="0.9" fill="#fff"/><circle cx="-3" cy="0" r="0.9" fill="#fff"/></g></svg>
<span id="f16" class="t" style="left:99.1px;top:222px;font-size:18.7px;line-height:20px;color:#111;font-weight:normal;font-family:'Liberation Sans',sans-serif;transform:scaleX(0.8826);transform-origin:0 0;">Target 1</span>
<div style="left:80px;top:247px;width:1px;height:9px;background:repeating-linear-gradient(180deg,#a0a0a0 0 1px,transparent 1px 3px);"></div>
<svg style="left:73.8px;top:255.9px;overflow:visible" width="13.4" height="13.4" viewBox="0 0 13.4 13.4"><defs><linearGradient id="gbx" x1="0" y1="0" x2="0" y2="1"><stop offset="0" stop-color="#fdfdfd"/><stop offset="1" stop-color="#e4e4e4"/></linearGradient></defs><rect x="0.9" y="0.9" width="11.6" height="11.6" rx="2" fill="url(#gbx)" stroke="#9c9c9c" stroke-width="1.8"/><path d="M3.2,6.7 H10.2" stroke="#4a60a8" stroke-width="1.7"/></svg>
<div style="left:87px;top:262px;width:9px;height:1px;background:repeating-linear-gradient(90deg,#a0a0a0 0 1px,transparent 1px 3px);"></div>
<svg style="left:96px;top:251.7px;overflow:visible" width="23" height="17.5" viewBox="0 0 23 17.5"><path d="M1.5,16.5 V1.5 h7 l2,2 h9 v5" fill="#f7e08a" stroke="#9a8040" stroke-width="1"/><path d="M1.5,16.8 L5.5,7 H22.5 L18.5,16.8 Z" fill="#f2b432" stroke="#5a4420" stroke-width="1.2"/></svg>
<span id="f17" class="t" style="left:129.2px;top:252px;font-size:18.7px;line-height:20px;color:#111;font-weight:normal;font-family:'Liberation Sans',sans-serif;transform:scaleX(0.9019);transform-origin:0 0;">Source Group 1</span>
<div style="left:110px;top:277px;width:1px;height:315px;background:repeating-linear-gradient(180deg,#a0a0a0 0 1px,transparent 1px 3px);"></div>
<svg style="left:103.8px;top:286px;overflow:visible" width="13.4" height="13.4" viewBox="0 0 13.4 13.4"><defs><linearGradient id="gbx" x1="0" y1="0" x2="0" y2="1"><stop offset="0" stop-color="#fdfdfd"/><stop offset="1" stop-color="#e4e4e4"/></linearGradient></defs><rect x="0.9" y="0.9" width="11.6" height="11.6" rx="2" fill="url(#gbx)" stroke="#9c9c9c" stroke-width="1.8"/><path d="M3.2,6.7 H10.2" stroke="#4a60a8" stroke-width="1.7"/><path d="M6.7,3.2 V10.2" stroke="#4a60a8" stroke-width="1.7"/></svg>
<div style="left:117px;top:292px;width:10px;height:1px;background:repeating-linear-gradient(90deg,#a0a0a0 0 1px,transparent 1px 3px);"></div>
<svg style="left:127.6px;top:278px;overflow:visible" width="18" height="22.2" viewBox="0 0 18 22.2"><defs><pattern id="i3" width="3" height="3" patternUnits="userSpaceOnUse"><rect width="3" height="3" fill="#f2f2f2"/><rect width="1.5" height="1.5" fill="#c2c2c2"/><rect x="1.5" y="1.5" width="1.5" height="1.5" fill="#c2c2c2"/></pattern></defs><defs><linearGradient id="i2" x1="0" y1="0" x2="1" y2="1"><stop offset="0" stop-color="#ffffff"/><stop offset="0.5" stop-color="#eef2fb"/><stop offset="1" stop-color="#aebfea"/></linearGradient></defs><path d="M0.8,0.8 H12.2 L17.2,5.8 V21.4 H0.8 Z" fill="url(#i2)" stroke="#a4b2cc" stroke-width="1.5"/><path d="M2.2,2.5 H6.84 L11.16,10.434 L6.84,19.2 H2.2 Z" fill="url(#i3)"/><path d="M12.2,0.8 L17.2,5.8 H12.2 Z" fill="#4c5c7c" stroke="#4c5c7c" stroke-width="1"/><path d="M17.1,5 V21.3 H1" fill="none" stroke="#44526c" stroke-width="1.8"/></svg>
<span id="f18" class="t" style="left:159.7px;top:282px;font-size:18.7px;line-height:20px;color:#111;font-weight:normal;font-family:'Liberation Sans',sans-serif;transform:scaleX(0.9483);transform-origin:0 0;">main.c</span>
<svg style="left:103.8px;top:316px;overflow:visible" width="13.4" height="13.4" viewBox="0 0 13.4 13.4"><defs><linearGradient id="gbx" x1="0" y1="0" x2="0" y2="1"><stop offset="0" stop-color="#fdfdfd"/><stop offset="1" stop-color="#e4e4e4"/></linearGradient></defs><rect x="0.9" y="0.9" width="11.6" height="11.6" rx="2" fill="url(#gbx)" stroke="#9c9c9c" stroke-width="1.8"/><path d="M3.2,6.7 H10.2" stroke="#4a60a8" stroke-width="1.7"/><path d="M6.7,3.2 V10.2" stroke="#4a60a8" stroke-width="1.7"/></svg>
<div style="left:117px;top:322px;width:10px;height:1px;background:repeating-linear-gradient(90deg,#a0a0a0 0 1px,transparent 1px 3px);"></div>
<svg style="left:127.6px;top:308px;overflow:visible" width="18" height="22.2" viewBox="0 0 18 22.2"><defs><pattern id="i5" width="3" height="3" patternUnits="userSpaceOnUse"><rect width="3" height="3" fill="#f2f2f2"/><rect width="1.5" height="1.5" fill="#c2c2c2"/><rect x="1.5" y="1.5" width="1.5" height="1.5" fill="#c2c2c2"/></pattern></defs><defs><linearGradient id="i4" x1="0" y1="0" x2="1" y2="1"><stop offset="0" stop-color="#ffffff"/><stop offset="0.5" stop-color="#eef2fb"/><stop offset="1" stop-color="#aebfea"/></linearGradient></defs><path d="M0.8,0.8 H12.2 L17.2,5.8 V21.4 H0.8 Z" fill="url(#i4)" stroke="#a4b2cc" stroke-width="1.5"/><path d="M2.2,2.5 H6.84 L11.16,10.434 L6.84,19.2 H2.2 Z" fill="url(#i5)"/><path d="M12.2,0.8 L17.2,5.8 H12.2 Z" fill="#4c5c7c" stroke="#4c5c7c" stroke-width="1"/><path d="M17.1,5 V21.3 H1" fill="none" stroke="#44526c" stroke-width="1.8"/></svg>
<span id="f19" class="t" style="left:159.7px;top:312px;font-size:18.7px;line-height:20px;color:#111;font-weight:normal;font-family:'Liberation Sans',sans-serif;transform:scaleX(0.9167);transform-origin:0 0;">Timer0.c</span>
<svg style="left:103.8px;top:346px;overflow:visible" width="13.4" height="13.4" viewBox="0 0 13.4 13.4"><defs><linearGradient id="gbx" x1="0" y1="0" x2="0" y2="1"><stop offset="0" stop-color="#fdfdfd"/><stop offset="1" stop-color="#e4e4e4"/></linearGradient></defs><rect x="0.9" y="0.9" width="11.6" height="11.6" rx="2" fill="url(#gbx)" stroke="#9c9c9c" stroke-width="1.8"/><path d="M3.2,6.7 H10.2" stroke="#4a60a8" stroke-width="1.7"/><path d="M6.7,3.2 V10.2" stroke="#4a60a8" stroke-width="1.7"/></svg>
<div style="left:117px;top:352px;width:10px;height:1px;background:repeating-linear-gradient(90deg,#a0a0a0 0 1px,transparent 1px 3px);"></div>
<svg style="left:127.6px;top:338px;overflow:visible" width="18" height="22.2" viewBox="0 0 18 22.2"><defs><pattern id="i7" width="3" height="3" patternUnits="userSpaceOnUse"><rect width="3" height="3" fill="#f2f2f2"/><rect width="1.5" height="1.5" fill="#c2c2c2"/><rect x="1.5" y="1.5" width="1.5" height="1.5" fill="#c2c2c2"/></pattern></defs><defs><linearGradient id="i6" x1="0" y1="0" x2="1" y2="1"><stop offset="0" stop-color="#ffffff"/><stop offset="0.5" stop-color="#eef2fb"/><stop offset="1" stop-color="#aebfea"/></linearGradient></defs><path d="M0.8,0.8 H12.2 L17.2,5.8 V21.4 H0.8 Z" fill="url(#i6)" stroke="#a4b2cc" stroke-width="1.5"/><path d="M2.2,2.5 H6.84 L11.16,10.434 L6.84,19.2 H2.2 Z" fill="url(#i7)"/><path d="M12.2,0.8 L17.2,5.8 H12.2 Z" fill="#4c5c7c" stroke="#4c5c7c" stroke-width="1"/><path d="M17.1,5 V21.3 H1" fill="none" stroke="#44526c" stroke-width="1.8"/></svg>
<span id="f20" class="t" style="left:159.7px;top:342px;font-size:18.7px;line-height:20px;color:#111;font-weight:normal;font-family:'Liberation Sans',sans-serif;transform:scaleX(0.9405);transform-origin:0 0;">Int0.c</span>
<svg style="left:103.8px;top:376px;overflow:visible" width="13.4" height="13.4" viewBox="0 0 13.4 13.4"><defs><linearGradient id="gbx" x1="0" y1="0" x2="0" y2="1"><stop offset="0" stop-color="#fdfdfd"/><stop offset="1" stop-color="#e4e4e4"/></linearGradient></defs><rect x="0.9" y="0.9" width="11.6" height="11.6" rx="2" fill="url(#gbx)" stroke="#9c9c9c" stroke-width="1.8"/><path d="M3.2,6.7 H10.2" stroke="#4a60a8" stroke-width="1.7"/><path d="M6.7,3.2 V10.2" stroke="#4a60a8" stroke-width="1.7"/></svg>
<div style="left:117px;top:382px;width:10px;height:1px;background:repeating-linear-gradient(90deg,#a0a0a0 0 1px,transparent 1px 3px);"></div>
<svg style="left:127.6px;top:368px;overflow:visible" width="18" height="22.2" viewBox="0 0 18 22.2"><defs><pattern id="i9" width="3" height="3" patternUnits="userSpaceOnUse"><rect width="3" height="3" fill="#f2f2f2"/><rect width="1.5" height="1.5" fill="#c2c2c2"/><rect x="1.5" y="1.5" width="1.5" height="1.5" fill="#c2c2c2"/></pattern></defs><defs><linearGradient id="i8" x1="0" y1="0" x2="1" y2="1"><stop offset="0" stop-color="#ffffff"/><stop offset="0.5" stop-color="#eef2fb"/><stop offset="1" stop-color="#aebfea"/></linearGradient></defs><path d="M0.8,0.8 H12.2 L17.2,5.8 V21.4 H0.8 Z" fill="url(#i8)" stroke="#a4b2cc" stroke-width="1.5"/><path d="M2.2,2.5 H6.84 L11.16,10.434 L6.84,19.2 H2.2 Z" fill="url(#i9)"/><path d="M12.2,0.8 L17.2,5.8 H12.2 Z" fill="#4c5c7c" stroke="#4c5c7c" stroke-width="1"/><path d="M17.1,5 V21.3 H1" fill="none" stroke="#44526c" stroke-width="1.8"/></svg>
<span id="f21" class="t" style="left:159.7px;top:372px;font-size:18.7px;line-height:20px;color:#111;font-weight:normal;font-family:'Liberation Sans',sans-serif;transform:scaleX(0.8726);transform-origin:0 0;">IR.c</span>
<svg style="left:103.8px;top:406px;overflow:visible" width="13.4" height="13.4" viewBox="0 0 13.4 13.4"><defs><linearGradient id="gbx" x1="0" y1="0" x2="0" y2="1"><stop offset="0" stop-color="#fdfdfd"/><stop offset="1" stop-color="#e4e4e4"/></linearGradient></defs><rect x="0.9" y="0.9" width="11.6" height="11.6" rx="2" fill="url(#gbx)" stroke="#9c9c9c" stroke-width="1.8"/><path d="M3.2,6.7 H10.2" stroke="#4a60a8" stroke-width="1.7"/><path d="M6.7,3.2 V10.2" stroke="#4a60a8" stroke-width="1.7"/></svg>
<div style="left:117px;top:412px;width:10px;height:1px;background:repeating-linear-gradient(90deg,#a0a0a0 0 1px,transparent 1px 3px);"></div>
<svg style="left:127.6px;top:398px;overflow:visible" width="18" height="22.2" viewBox="0 0 18 22.2"><defs><pattern id="i11" width="3" height="3" patternUnits="userSpaceOnUse"><rect width="3" height="3" fill="#f2f2f2"/><rect width="1.5" height="1.5" fill="#c2c2c2"/><rect x="1.5" y="1.5" width="1.5" height="1.5" fill="#c2c2c2"/></pattern></defs><defs><linearGradient id="i10" x1="0" y1="0" x2="1" y2="1"><stop offset="0" stop-color="#ffffff"/><stop offset="0.5" stop-color="#eef2fb"/><stop offset="1" stop-color="#aebfea"/></linearGradient></defs><path d="M0.8,0.8 H12.2 L17.2,5.8 V21.4 H0.8 Z" fill="url(#i10)" stroke="#a4b2cc" stroke-width="1.5"/><path d="M2.2,2.5 H6.84 L11.16,10.434 L6.84,19.2 H2.2 Z" fill="url(#i11)"/><path d="M12.2,0.8 L17.2,5.8 H12.2 Z" fill="#4c5c7c" stroke="#4c5c7c" stroke-width="1"/><path d="M17.1,5 V21.3 H1" fill="none" stroke="#44526c" stroke-width="1.8"/></svg>
<span id="f22" class="t" style="left:159.7px;top:402px;font-size:18.7px;line-height:20px;color:#111;font-weight:normal;font-family:'Liberation Sans',sans-serif;transform:scaleX(0.9362);transform-origin:0 0;">Nixie.c</span>
<svg style="left:103.8px;top:436px;overflow:visible" width="13.4" height="13.4" viewBox="0 0 13.4 13.4"><defs><linearGradient id="gbx" x1="0" y1="0" x2="0" y2="1"><stop offset="0" stop-color="#fdfdfd"/><stop offset="1" stop-color="#e4e4e4"/></linearGradient></defs><rect x="0.9" y="0.9" width="11.6" height="11.6" rx="2" fill="url(#gbx)" stroke="#9c9c9c" stroke-width="1.8"/><path d="M3.2,6.7 H10.2" stroke="#4a60a8" stroke-width="1.7"/><path d="M6.7,3.2 V10.2" stroke="#4a60a8" stroke-width="1.7"/></svg>
<div style="left:117px;top:442px;width:10px;height:1px;background:repeating-linear-gradient(90deg,#a0a0a0 0 1px,transparent 1px 3px);"></div>
<svg style="left:127.6px;top:428px;overflow:visible" width="18" height="22.2" viewBox="0 0 18 22.2"><defs><pattern id="i13" width="3" height="3" patternUnits="userSpaceOnUse"><rect width="3" height="3" fill="#f2f2f2"/><rect width="1.5" height="1.5" fill="#c2c2c2"/><rect x="1.5" y="1.5" width="1.5" height="1.5" fill="#c2c2c2"/></pattern></defs><defs><linearGradient id="i12" x1="0" y1="0" x2="1" y2="1"><stop offset="0" stop-color="#ffffff"/><stop offset="0.5" stop-color="#eef2fb"/><stop offset="1" stop-color="#aebfea"/></linearGradient></defs><path d="M0.8,0.8 H12.2 L17.2,5.8 V21.4 H0.8 Z" fill="url(#i12)" stroke="#a4b2cc" stroke-width="1.5"/><path d="M2.2,2.5 H6.84 L11.16,10.434 L6.84,19.2 H2.2 Z" fill="url(#i13)"/><path d="M12.2,0.8 L17.2,5.8 H12.2 Z" fill="#4c5c7c" stroke="#4c5c7c" stroke-width="1"/><path d="M17.1,5 V21.3 H1" fill="none" stroke="#44526c" stroke-width="1.8"/></svg>
<span id="f23" class="t" style="left:159.7px;top:432px;font-size:18.7px;line-height:20px;color:#111;font-weight:normal;font-family:'Liberation Sans',sans-serif;transform:scaleX(0.8746);transform-origin:0 0;">DELAY.c</span>
<div style="left:110px;top:472px;width:17px;height:1px;background:repeating-linear-gradient(90deg,#a0a0a0 0 1px,transparent 1px 3px);"></div>
<svg style="left:127.6px;top:458px;overflow:visible" width="18" height="22.2" viewBox="0 0 18 22.2"><defs><linearGradient id="i14" x1="0" y1="0" x2="1" y2="1"><stop offset="0" stop-color="#ffffff"/><stop offset="0.5" stop-color="#eef2fb"/><stop offset="1" stop-color="#aebfea"/></linearGradient></defs><path d="M0.8,0.8 H12.2 L17.2,5.8 V21.4 H0.8 Z" fill="url(#i14)" stroke="#a4b2cc" stroke-width="1.5"/><path d="M12.2,0.8 L17.2,5.8 H12.2 Z" fill="#4c5c7c" stroke="#4c5c7c" stroke-width="1"/><path d="M17.1,5 V21.3 H1" fill="none" stroke="#44526c" stroke-width="1.8"/></svg>
<span id="f24" class="t" style="left:159.7px;top:462px;font-size:18.7px;line-height:20px;color:#111;font-weight:normal;font-family:'Liberation Sans',sans-serif;transform:scaleX(0.9104);transform-origin:0 0;">Timer0.h</span>
<div style="left:110px;top:502px;width:17px;height:1px;background:repeating-linear-gradient(90deg,#a0a0a0 0 1px,transparent 1px 3px);"></div>
<svg style="left:127.6px;top:488px;overflow:visible" width="18" height="22.2" viewBox="0 0 18 22.2"><defs><linearGradient id="i15" x1="0" y1="0" x2="1" y2="1"><stop offset="0" stop-color="#ffffff"/><stop offset="0.5" stop-color="#eef2fb"/><stop offset="1" stop-color="#aebfea"/></linearGradient></defs><path d="M0.8,0.8 H12.2 L17.2,5.8 V21.4 H0.8 Z" fill="url(#i15)" stroke="#a4b2cc" stroke-width="1.5"/><path d="M12.2,0.8 L17.2,5.8 H12.2 Z" fill="#4c5c7c" stroke="#4c5c7c" stroke-width="1"/><path d="M17.1,5 V21.3 H1" fill="none" stroke="#44526c" stroke-width="1.8"/></svg>
<span id="f25" class="t" style="left:159.7px;top:492px;font-size:18.7px;line-height:20px;color:#111;font-weight:normal;font-family:'Liberation Sans',sans-serif;transform:scaleX(0.9409);transform-origin:0 0;">Int0.h</span>
<div style="left:110px;top:532px;width:17px;height:1px;background:repeating-linear-gradient(90deg,#a0a0a0 0 1px,transparent 1px 3px);"></div>
<svg style="left:127.6px;top:518px;overflow:visible" width="18" height="22.2" viewBox="0 0 18 22.2"><defs><linearGradient id="i16" x1="0" y1="0" x2="1" y2="1"><stop offset="0" stop-color="#ffffff"/><stop offset="0.5" stop-color="#eef2fb"/><stop offset="1" stop-color="#aebfea"/></linearGradient></defs><path d="M0.8,0.8 H12.2 L17.2,5.8 V21.4 H0.8 Z" fill="url(#i16)" stroke="#a4b2cc" stroke-width="1.5"/><path d="M12.2,0.8 L17.2,5.8 H12.2 Z" fill="#4c5c7c" stroke="#4c5c7c" stroke-width="1"/><path d="M17.1,5 V21.3 H1" fill="none" stroke="#44526c" stroke-width="1.8"/></svg>
<span id="f26" class="t" style="left:159.7px;top:522px;font-size:18.7px;line-height:20px;color:#111;font-weight:normal;font-family:'Liberation Sans',sans-serif;transform:scaleX(0.8751);transform-origin:0 0;">IR.h</span>
<div style="left:110px;top:562px;width:17px;height:1px;background:repeating-linear-gradient(90deg,#a0a0a0 0 1px,transparent 1px 3px);"></div>
<svg style="left:127.6px;top:548px;overflow:visible" width="18" height="22.2" viewBox="0 0 18 22.2"><defs><linearGradient id="i17" x1="0" y1="0" x2="1" y2="1"><stop offset="0" stop-color="#ffffff"/><stop offset="0.5" stop-color="#eef2fb"/><stop offset="1" stop-color="#aebfea"/></linearGradient></defs><path d="M0.8,0.8 H12.2 L17.2,5.8 V21.4 H0.8 Z" fill="url(#i17)" stroke="#a4b2cc" stroke-width="1.5"/><path d="M12.2,0.8 L17.2,5.8 H12.2 Z" fill="#4c5c7c" stroke="#4c5c7c" stroke-width="1"/><path d="M17.1,5 V21.3 H1" fill="none" stroke="#44526c" stroke-width="1.8"/></svg>
<span id="f27" class="t" style="left:159.7px;top:552px;font-size:18.7px;line-height:20px;color:#111;font-weight:normal;font-family:'Liberation Sans',sans-serif;transform:scaleX(0.9278);transform-origin:0 0;">Nixie.h</span>
<div style="left:110px;top:592px;width:17px;height:1px;background:repeating-linear-gradient(90deg,#a0a0a0 0 1px,transparent 1px 3px);"></div>
<svg style="left:127.6px;top:578px;overflow:visible" width="18" height="22.2" viewBox="0 0 18 22.2"><defs><linearGradient id="i18" x1="0" y1="0" x2="1" y2="1"><stop offset="0" stop-color="#ffffff"/><stop offset="0.5" stop-color="#eef2fb"/><stop offset="1" stop-color="#aebfea"/></linearGradient></defs><path d="M0.8,0.8 H12.2 L17.2,5.8 V21.4 H0.8 Z" fill="url(#i18)" stroke="#a4b2cc" stroke-width="1.5"/><path d="M12.2,0.8 L17.2,5.8 H12.2 Z" fill="#4c5c7c" stroke="#4c5c7c" stroke-width="1"/><path d="M17.1,5 V21.3 H1" fill="none" stroke="#44526c" stroke-width="1.8"/></svg>
<span id="f28" class="t" style="left:159.7px;top:582px;font-size:18.7px;line-height:20px;color:#111;font-weight:normal;font-family:'Liberation Sans',sans-serif;transform:scaleX(0.8689);transform-origin:0 0;">DELAY.h</span>
<div style="left:5.4px;top:1223.2px;width:266px;height:24.6px;background:#f0f0f0;"></div>
<div style="left:212px;top:1223.2px;width:34px;height:24.6px;background:repeating-conic-gradient(#e4e4e4 0 25%,#f6f6f6 0 50%) 0 0/2px 2px;"></div>
<div style="left:5.4px;top:1223.2px;width:24px;height:24.6px;background:#f0f0f0;border-right:2px solid #8a8a8a;border-bottom:2px solid #8a8a8a;border-top:1px solid #fff;border-left:1px solid #fff"></div>
<div style="left:29.4px;top:1223.2px;width:183px;height:24.6px;background:#efefef;border-right:2px solid #8a8a8a;border-bottom:2px solid #8a8a8a;border-left:1px solid #fff;border-top:1px solid #fff"></div>
<div style="left:246px;top:1223.2px;width:25.2px;height:24.6px;background:#f0f0f0;border-right:2px solid #8a8a8a;border-bottom:2px solid #8a8a8a;border-left:1px solid #fff;border-top:1px solid #fff"></div>
<svg style="left:12px;top:1229px;overflow:visible" width="7" height="12" viewBox="0 0 7 12"><path d="M6.5,0.5 V11.5 L0.5,6 Z" fill="#000"/></svg>
<svg style="left:256px;top:1229px;overflow:visible" width="7" height="12" viewBox="0 0 7 12"><path d="M0.5,0.5 V11.5 L6.5,6 Z" fill="#000"/></svg>
<div style="left:0px;top:153px;width:1.3px;height:1097px;background:#7a7a7a;"></div>
<div style="left:0px;top:1249.5px;width:3px;height:1.5px;background:#222;"></div>
<div style="left:0px;top:1250px;width:276px;height:35px;background:#f4f4f4;"></div>
<div style="left:70px;top:1249.5px;width:206px;height:2px;background:#111;"></div>
<div style="left:4.5px;top:1249.5px;width:66px;height:34.3px;background:#f0f0f0;border-right:2px solid #111;border-bottom:2px solid #111"></div>
<svg style="left:10.7px;top:1256px;overflow:visible" width="20.5" height="19" viewBox="0 0 20.5 19"><rect x="0.7" y="0.7" width="19" height="17.5" fill="#f8f8c0" stroke="#3a4a8a" stroke-width="1.4"/><rect x="0.7" y="0.7" width="19" height="3.5" fill="#4a7ae0"/><path d="M4,7 V16 M6,8 H17 M6,11 H17 M6,14 H17" stroke="#8a9a20" stroke-width="1.6"/></svg>
<span id="f29" class="t" style="left:36.6px;top:1257px;font-size:18px;line-height:20px;color:#1a1a1a;font-weight:normal;font-family:'Liberation Sans',sans-serif;transform:scaleX(0.8433);transform-origin:0 0;">Pr...</span>
<svg style="left:75px;top:1254px;overflow:visible" width="24" height="24" viewBox="0 0 24 24"><path d="M1,11 L11,1 L23,9 L13,19 Z" fill="#9a5ae0" stroke="#5a2aa0" stroke-width="1.2"/><circle cx="15" cy="17" r="6" fill="#4a7ae8" stroke="#fff" stroke-width="1.2"/><text x="12" y="21" font-size="9" font-family="Liberation Sans" font-weight="bold" fill="#fff">?</text></svg>
<span id="f30" class="t" style="left:102.6px;top:1257px;font-size:18px;line-height:20px;color:#8a8a8a;font-weight:normal;font-family:'Liberation Sans',sans-serif;transform:scaleX(0.7588);transform-origin:0 0;">B...</span>
<div style="left:135px;top:1255px;width:1.5px;height:23px;background:#c0c0c0;"></div>
<span id="f31" class="t" style="left:145.4px;top:1255px;font-size:19px;line-height:22px;color:#222;font-weight:normal;font-family:'Liberation Sans',sans-serif;transform:scaleX(0.9453);transform-origin:0 0;">{ }</span>
<span id="f32" class="t" style="left:168.6px;top:1257px;font-size:18px;line-height:20px;color:#8a8a8a;font-weight:normal;font-family:'Liberation Sans',sans-serif;transform:scaleX(0.8536);transform-origin:0 0;">F...</span>
<div style="left:201px;top:1255px;width:1.5px;height:23px;background:#c0c0c0;"></div>
<span id="f33" class="t" style="left:208px;top:1255px;font-size:19px;line-height:22px;color:#222;font-weight:normal;font-family:'Liberation Sans',sans-serif;transform:scaleX(0.9446);transform-origin:0 0;">{}</span>
<svg style="left:219px;top:1267px;overflow:visible" width="12" height="10" viewBox="0 0 12 10"><path d="M0,3.5 H6 V0 L11.5,5 L6,10 V6.5 H0 Z" fill="#2a6ad8"/></svg>
<span id="f34" class="t" style="left:233.8px;top:1257px;font-size:18px;line-height:20px;color:#8a8a8a;font-weight:normal;font-family:'Liberation Sans',sans-serif;transform:scaleX(0.8744);transform-origin:0 0;">T...</span>
<div style="left:267px;top:1255px;width:1.5px;height:23px;background:#c0c0c0;"></div>
<div style="left:283px;top:153px;width:2276px;height:35px;background:#f6f6f6;"></div>
<div style="left:283px;top:152px;width:2276px;height:2.6px;background:#b4b4b4;"></div>
<div style="left:283px;top:153px;width:1px;height:35px;background:#c4c4c4;"></div>
<svg style="left:0px;top:0px;overflow:visible" width="1600" height="200" viewBox="0 0 1600 200"><path d="M289.4,188 L320.9,157.5 H438 Q441,157.5 441,160.5 V188 Z" fill="#ecd7a3"/><path d="M289.4,188 L320.9,157.5 H438 Q441,157.5 441,160.5 V188" fill="none" stroke="#b4b4b4" stroke-width="1.8"/><path d="M442.2,159.5 V188" stroke="#c4c4c4" stroke-width="2"/><path d="M298.4,159.1 H438" stroke="#fff" stroke-opacity="0.5" stroke-width="1"/><path d="M443,188 V165.5 L451.5,157.5 H565.7 Q568.7,157.5 568.7,160.5 V188 Z" fill="#b5a7c1"/><path d="M443,188 V165.5 L451.5,157.5 H565.7 Q568.7,157.5 568.7,160.5 V188" fill="none" stroke="#b4b4b4" stroke-width="1.8"/><path d="M569.9000000000001,159.5 V188" stroke="#c4c4c4" stroke-width="2"/><path d="M452,159.1 H565.7" stroke="#fff" stroke-opacity="0.5" stroke-width="1"/><path d="M570,188 V165.5 L578.5,157.5 H684 Q687,157.5 687,160.5 V188 Z" fill="#a7c3d7"/><path d="M570,188 V165.5 L578.5,157.5 H684 Q687,157.5 687,160.5 V188" fill="none" stroke="#b4b4b4" stroke-width="1.8"/><path d="M688.2,159.5 V188" stroke="#c4c4c4" stroke-width="2"/><path d="M579,159.1 H684" stroke="#fff" stroke-opacity="0.5" stroke-width="1"/><path d="M804.5,188 V165.5 L813.0,157.5 H891.3 Q894.3,157.5 894.3,160.5 V188 Z" fill="#f5b886"/><path d="M804.5,188 V165.5 L813.0,157.5 H891.3 Q894.3,157.5 894.3,160.5 V188" fill="none" stroke="#b4b4b4" stroke-width="1.8"/><path d="M895.5,159.5 V188" stroke="#c4c4c4" stroke-width="2"/><path d="M813.5,159.1 H891.3" stroke="#fff" stroke-opacity="0.5" stroke-width="1"/><path d="M897,188 V165.5 L905.5,157.5 H981 Q984,157.5 984,160.5 V188 Z" fill="#9fc4b7"/><path d="M897,188 V165.5 L905.5,157.5 H981 Q984,157.5 984,160.5 V188" fill="none" stroke="#b4b4b4" stroke-width="1.8"/><path d="M985.2,159.5 V188" stroke="#c4c4c4" stroke-width="2"/><path d="M906,159.1 H981" stroke="#fff" stroke-opacity="0.5" stroke-width="1"/><path d="M987,188 V165.5 L995.5,157.5 H1089 Q1092,157.5 1092,160.5 V188 Z" fill="#b9a6dd"/><path d="M987,188 V165.5 L995.5,157.5 H1089 Q1092,157.5 1092,160.5 V188" fill="none" stroke="#b4b4b4" stroke-width="1.8"/><path d="M1093.2,159.5 V188" stroke="#c4c4c4" stroke-width="2"/><path d="M996,159.1 H1089" stroke="#fff" stroke-opacity="0.5" stroke-width="1"/><path d="M1095,188 V165.5 L1103.5,157.5 H1194 Q1197,157.5 1197,160.5 V188 Z" fill="#ef9f9f"/><path d="M1095,188 V165.5 L1103.5,157.5 H1194 Q1197,157.5 1197,160.5 V188" fill="none" stroke="#b4b4b4" stroke-width="1.8"/><path d="M1198.2,159.5 V188" stroke="#c4c4c4" stroke-width="2"/><path d="M1104,159.1 H1194" stroke="#fff" stroke-opacity="0.5" stroke-width="1"/><path d="M1200.4,188 V165.5 L1208.9,157.5 H1325 Q1328,157.5 1328,160.5 V188 Z" fill="#c1d1a1"/><path d="M1200.4,188 V165.5 L1208.9,157.5 H1325 Q1328,157.5 1328,160.5 V188" fill="none" stroke="#b4b4b4" stroke-width="1.8"/><path d="M1329.2,159.5 V188" stroke="#c4c4c4" stroke-width="2"/><path d="M1209.4,159.1 H1325" stroke="#fff" stroke-opacity="0.5" stroke-width="1"/><path d="M1331,188 V165.5 L1339.5,157.5 H1452.8 Q1455.8,157.5 1455.8,160.5 V188 Z" fill="#fdd981"/><path d="M1331,188 V165.5 L1339.5,157.5 H1452.8 Q1455.8,157.5 1455.8,160.5 V188" fill="none" stroke="#b4b4b4" stroke-width="1.8"/><path d="M1457.0,159.5 V188" stroke="#c4c4c4" stroke-width="2"/><path d="M1340,159.1 H1452.8" stroke="#fff" stroke-opacity="0.5" stroke-width="1"/><path d="M1458.9,188 V165.5 L1467.4,157.5 H1575.5 Q1578.5,157.5 1578.5,160.5 V188 Z" fill="#c9d9f1"/><path d="M1458.9,188 V165.5 L1467.4,157.5 H1575.5 Q1578.5,157.5 1578.5,160.5 V188" fill="none" stroke="#b4b4b4" stroke-width="1.8"/><path d="M1579.7,159.5 V188" stroke="#c4c4c4" stroke-width="2"/><path d="M1467.9,159.1 H1575.5" stroke="#fff" stroke-opacity="0.5" stroke-width="1"/><path d="M667,189 L697.5,157.5 H798.6 Q801.6,157.5 801.6,160.5 V189 Z" fill="#dbafc5"/><path d="M667,188 L697.5,157.5 H798.6 Q801.6,157.5 801.6,160.5 V188" fill="none" stroke="#b4b4b4" stroke-width="1.8"/></svg>
<div style="left:283px;top:187.6px;width:384px;height:1.6px;background:#bab2b6;"></div>
<div style="left:801.6px;top:187.6px;width:1757px;height:1.6px;background:#bab2b6;"></div>
<svg style="left:326px;top:161.7px;overflow:visible" width="17" height="21.4" viewBox="0 0 17 21.4"><defs><linearGradient id="i19" x1="0" y1="0" x2="1" y2="1"><stop offset="0" stop-color="#ffffff"/><stop offset="0.5" stop-color="#eef2fb"/><stop offset="1" stop-color="#aebfea"/></linearGradient></defs><path d="M0.8,0.8 H11.7 L16.2,5.3 V20.599999999999998 H0.8 Z" fill="url(#i19)" stroke="#a4b2cc" stroke-width="1.5"/><path d="M11.7,0.8 L16.2,5.3 H11.7 Z" fill="#4c5c7c" stroke="#4c5c7c" stroke-width="1"/><path d="M16.1,4.5 V20.5 H1" fill="none" stroke="#44526c" stroke-width="1.8"/></svg>
<span id="f35" class="t" style="left:362.6px;top:163px;font-size:16.5px;line-height:20px;color:#1a1020;font-weight:normal;font-family:'Liberation Sans',sans-serif;transform:scaleX(0.9050);transform-origin:0 0;">DELAY.h</span>
<svg style="left:457px;top:161.7px;overflow:visible" width="17" height="21.4" viewBox="0 0 17 21.4"><defs><pattern id="i21" width="3" height="3" patternUnits="userSpaceOnUse"><rect width="3" height="3" fill="#f2f2f2"/><rect width="1.5" height="1.5" fill="#c2c2c2"/><rect x="1.5" y="1.5" width="1.5" height="1.5" fill="#c2c2c2"/></pattern></defs><defs><linearGradient id="i20" x1="0" y1="0" x2="1" y2="1"><stop offset="0" stop-color="#ffffff"/><stop offset="0.5" stop-color="#eef2fb"/><stop offset="1" stop-color="#aebfea"/></linearGradient></defs><path d="M0.8,0.8 H11.7 L16.2,5.3 V20.599999999999998 H0.8 Z" fill="url(#i20)" stroke="#a4b2cc" stroke-width="1.5"/><path d="M2.2,2.5 H6.46 L10.54,10.057999999999998 L6.46,18.4 H2.2 Z" fill="url(#i21)"/><path d="M11.7,0.8 L16.2,5.3 H11.7 Z" fill="#4c5c7c" stroke="#4c5c7c" stroke-width="1"/><path d="M16.1,4.5 V20.5 H1" fill="none" stroke="#44526c" stroke-width="1.8"/></svg>
<span id="f36" class="t" style="left:493px;top:163px;font-size:16.5px;line-height:20px;color:#1a1020;font-weight:normal;font-family:'Liberation Sans',sans-serif;transform:scaleX(0.8806);transform-origin:0 0;">DELAY.c</span>
<svg style="left:585px;top:161.7px;overflow:visible" width="17" height="21.4" viewBox="0 0 17 21.4"><defs><linearGradient id="i22" x1="0" y1="0" x2="1" y2="1"><stop offset="0" stop-color="#ffffff"/><stop offset="0.5" stop-color="#eef2fb"/><stop offset="1" stop-color="#aebfea"/></linearGradient></defs><path d="M0.8,0.8 H11.7 L16.2,5.3 V20.599999999999998 H0.8 Z" fill="url(#i22)" stroke="#a4b2cc" stroke-width="1.5"/><path d="M11.7,0.8 L16.2,5.3 H11.7 Z" fill="#4c5c7c" stroke="#4c5c7c" stroke-width="1"/><path d="M16.1,4.5 V20.5 H1" fill="none" stroke="#44526c" stroke-width="1.8"/></svg>
<span id="f37" class="t" style="left:619px;top:163px;font-size:16.5px;line-height:20px;color:#1a1020;font-weight:normal;font-family:'Liberation Sans',sans-serif;transform:scaleX(0.9913);transform-origin:0 0;">Nixie.h</span>
<svg style="left:818px;top:161.7px;overflow:visible" width="17" height="21.4" viewBox="0 0 17 21.4"><defs><linearGradient id="i23" x1="0" y1="0" x2="1" y2="1"><stop offset="0" stop-color="#ffffff"/><stop offset="0.5" stop-color="#eef2fb"/><stop offset="1" stop-color="#aebfea"/></linearGradient></defs><path d="M0.8,0.8 H11.7 L16.2,5.3 V20.599999999999998 H0.8 Z" fill="url(#i23)" stroke="#a4b2cc" stroke-width="1.5"/><path d="M11.7,0.8 L16.2,5.3 H11.7 Z" fill="#4c5c7c" stroke="#4c5c7c" stroke-width="1"/><path d="M16.1,4.5 V20.5 H1" fill="none" stroke="#44526c" stroke-width="1.8"/></svg>
<span id="f38" class="t" style="left:851px;top:163px;font-size:16.5px;line-height:20px;color:#1a1020;font-weight:normal;font-family:'Liberation Sans',sans-serif;transform:scaleX(0.9747);transform-origin:0 0;">IR.h</span>
<svg style="left:911px;top:161.7px;overflow:visible" width="17" height="21.4" viewBox="0 0 17 21.4"><defs><pattern id="i25" width="3" height="3" patternUnits="userSpaceOnUse"><rect width="3" height="3" fill="#f2f2f2"/><rect width="1.5" height="1.5" fill="#c2c2c2"/><rect x="1.5" y="1.5" width="1.5" height="1.5" fill="#c2c2c2"/></pattern></defs><defs><linearGradient id="i24" x1="0" y1="0" x2="1" y2="1"><stop offset="0" stop-color="#ffffff"/><stop offset="0.5" stop-color="#eef2fb"/><stop offset="1" stop-color="#aebfea"/></linearGradient></defs><path d="M0.8,0.8 H11.7 L16.2,5.3 V20.599999999999998 H0.8 Z" fill="url(#i24)" stroke="#a4b2cc" stroke-width="1.5"/><path d="M2.2,2.5 H6.46 L10.54,10.057999999999998 L6.46,18.4 H2.2 Z" fill="url(#i25)"/><path d="M11.7,0.8 L16.2,5.3 H11.7 Z" fill="#4c5c7c" stroke="#4c5c7c" stroke-width="1"/><path d="M16.1,4.5 V20.5 H1" fill="none" stroke="#44526c" stroke-width="1.8"/></svg>
<span id="f39" class="t" style="left:941px;top:163px;font-size:16.5px;line-height:20px;color:#1a1020;font-weight:normal;font-family:'Liberation Sans',sans-serif;transform:scaleX(0.9201);transform-origin:0 0;">IR.c</span>
<svg style="left:1001px;top:161.7px;overflow:visible" width="17" height="21.4" viewBox="0 0 17 21.4"><defs><linearGradient id="i26" x1="0" y1="0" x2="1" y2="1"><stop offset="0" stop-color="#ffffff"/><stop offset="0.5" stop-color="#eef2fb"/><stop offset="1" stop-color="#aebfea"/></linearGradient></defs><path d="M0.8,0.8 H11.7 L16.2,5.3 V20.599999999999998 H0.8 Z" fill="url(#i26)" stroke="#a4b2cc" stroke-width="1.5"/><path d="M11.7,0.8 L16.2,5.3 H11.7 Z" fill="#4c5c7c" stroke="#4c5c7c" stroke-width="1"/><path d="M16.1,4.5 V20.5 H1" fill="none" stroke="#44526c" stroke-width="1.8"/></svg>
<span id="f40" class="t" style="left:1034.5px;top:163px;font-size:16.5px;line-height:20px;color:#1a1020;font-weight:normal;font-family:'Liberation Sans',sans-serif;transform:scaleX(1.0533);transform-origin:0 0;">Int0.h</span>
<svg style="left:1109px;top:161.7px;overflow:visible" width="17" height="21.4" viewBox="0 0 17 21.4"><defs><pattern id="i28" width="3" height="3" patternUnits="userSpaceOnUse"><rect width="3" height="3" fill="#f2f2f2"/><rect width="1.5" height="1.5" fill="#c2c2c2"/><rect x="1.5" y="1.5" width="1.5" height="1.5" fill="#c2c2c2"/></pattern></defs><defs><linearGradient id="i27" x1="0" y1="0" x2="1" y2="1"><stop offset="0" stop-color="#ffffff"/><stop offset="0.5" stop-color="#eef2fb"/><stop offset="1" stop-color="#aebfea"/></linearGradient></defs><path d="M0.8,0.8 H11.7 L16.2,5.3 V20.599999999999998 H0.8 Z" fill="url(#i27)" stroke="#a4b2cc" stroke-width="1.5"/><path d="M2.2,2.5 H6.46 L10.54,10.057999999999998 L6.46,18.4 H2.2 Z" fill="url(#i28)"/><path d="M11.7,0.8 L16.2,5.3 H11.7 Z" fill="#4c5c7c" stroke="#4c5c7c" stroke-width="1"/><path d="M16.1,4.5 V20.5 H1" fill="none" stroke="#44526c" stroke-width="1.8"/></svg>
<span id="f41" class="t" style="left:1142.5px;top:163px;font-size:16.5px;line-height:20px;color:#1a1020;font-weight:normal;font-family:'Liberation Sans',sans-serif;transform:scaleX(1.0283);transform-origin:0 0;">Int0.c</span>
<svg style="left:1213.5px;top:161.7px;overflow:visible" width="17" height="21.4" viewBox="0 0 17 21.4"><defs><linearGradient id="i29" x1="0" y1="0" x2="1" y2="1"><stop offset="0" stop-color="#ffffff"/><stop offset="0.5" stop-color="#eef2fb"/><stop offset="1" stop-color="#aebfea"/></linearGradient></defs><path d="M0.8,0.8 H11.7 L16.2,5.3 V20.599999999999998 H0.8 Z" fill="url(#i29)" stroke="#a4b2cc" stroke-width="1.5"/><path d="M11.7,0.8 L16.2,5.3 H11.7 Z" fill="#4c5c7c" stroke="#4c5c7c" stroke-width="1"/><path d="M16.1,4.5 V20.5 H1" fill="none" stroke="#44526c" stroke-width="1.8"/></svg>
<span id="f42" class="t" style="left:1247px;top:163px;font-size:16.5px;line-height:20px;color:#1a1020;font-weight:normal;font-family:'Liberation Sans',sans-serif;transform:scaleX(1.0078);transform-origin:0 0;">Timer0.h</span>
<svg style="left:1344.3px;top:161.7px;overflow:visible" width="17" height="21.4" viewBox="0 0 17 21.4"><defs><pattern id="i31" width="3" height="3" patternUnits="userSpaceOnUse"><rect width="3" height="3" fill="#f2f2f2"/><rect width="1.5" height="1.5" fill="#c2c2c2"/><rect x="1.5" y="1.5" width="1.5" height="1.5" fill="#c2c2c2"/></pattern></defs><defs><linearGradient id="i30" x1="0" y1="0" x2="1" y2="1"><stop offset="0" stop-color="#ffffff"/><stop offset="0.5" stop-color="#eef2fb"/><stop offset="1" stop-color="#aebfea"/></linearGradient></defs><path d="M0.8,0.8 H11.7 L16.2,5.3 V20.599999999999998 H0.8 Z" fill="url(#i30)" stroke="#a4b2cc" stroke-width="1.5"/><path d="M2.2,2.5 H6.46 L10.54,10.057999999999998 L6.46,18.4 H2.2 Z" fill="url(#i31)"/><path d="M11.7,0.8 L16.2,5.3 H11.7 Z" fill="#4c5c7c" stroke="#4c5c7c" stroke-width="1"/><path d="M16.1,4.5 V20.5 H1" fill="none" stroke="#44526c" stroke-width="1.8"/></svg>
<span id="f43" class="t" style="left:1377.8px;top:163px;font-size:16.5px;line-height:20px;color:#1a1020;font-weight:normal;font-family:'Liberation Sans',sans-serif;transform:scaleX(0.9880);transform-origin:0 0;">Timer0.c</span>
<svg style="left:1472px;top:161.7px;overflow:visible" width="17" height="21.4" viewBox="0 0 17 21.4"><defs><pattern id="i33" width="3" height="3" patternUnits="userSpaceOnUse"><rect width="3" height="3" fill="#f2f2f2"/><rect width="1.5" height="1.5" fill="#c2c2c2"/><rect x="1.5" y="1.5" width="1.5" height="1.5" fill="#c2c2c2"/></pattern></defs><defs><linearGradient id="i32" x1="0" y1="0" x2="1" y2="1"><stop offset="0" stop-color="#ffffff"/><stop offset="0.5" stop-color="#eef2fb"/><stop offset="1" stop-color="#aebfea"/></linearGradient></defs><path d="M0.8,0.8 H11.7 L16.2,5.3 V20.599999999999998 H0.8 Z" fill="url(#i32)" stroke="#a4b2cc" stroke-width="1.5"/><path d="M2.2,2.5 H6.46 L10.54,10.057999999999998 L6.46,18.4 H2.2 Z" fill="url(#i33)"/><path d="M11.7,0.8 L16.2,5.3 H11.7 Z" fill="#4c5c7c" stroke="#4c5c7c" stroke-width="1"/><path d="M16.1,4.5 V20.5 H1" fill="none" stroke="#44526c" stroke-width="1.8"/></svg>
<span id="f44" class="t" style="left:1505.5px;top:163px;font-size:16.5px;line-height:20px;color:#1a1020;font-weight:normal;font-family:'Liberation Sans',sans-serif;transform:scaleX(1.0140);transform-origin:0 0;">main.c*</span>
<svg style="left:702.8px;top:161.7px;overflow:visible" width="17" height="21.4" viewBox="0 0 17 21.4"><defs><pattern id="i35" width="3" height="3" patternUnits="userSpaceOnUse"><rect width="3" height="3" fill="#f2f2f2"/><rect width="1.5" height="1.5" fill="#c2c2c2"/><rect x="1.5" y="1.5" width="1.5" height="1.5" fill="#c2c2c2"/></pattern></defs><defs><linearGradient id="i34" x1="0" y1="0" x2="1" y2="1"><stop offset="0" stop-color="#ffffff"/><stop offset="0.5" stop-color="#eef2fb"/><stop offset="1" stop-color="#aebfea"/></linearGradient></defs><path d="M0.8,0.8 H11.7 L16.2,5.3 V20.599999999999998 H0.8 Z" fill="url(#i34)" stroke="#a4b2cc" stroke-width="1.5"/><path d="M2.2,2.5 H6.46 L10.54,10.057999999999998 L6.46,18.4 H2.2 Z" fill="url(#i35)"/><path d="M11.7,0.8 L16.2,5.3 H11.7 Z" fill="#4c5c7c" stroke="#4c5c7c" stroke-width="1"/><path d="M16.1,4.5 V20.5 H1" fill="none" stroke="#44526c" stroke-width="1.8"/></svg>
<span id="f45" class="t" style="left:735.9px;top:163px;font-size:16.5px;line-height:20px;color:#1a1020;font-weight:bold;font-family:'Liberation Sans',sans-serif;transform:scaleX(0.9793);transform-origin:0 0;">Nixie.c</span>
<div style="left:729.5px;top:185.5px;width:64px;height:2.2px;background:#000;"></div>
<svg style="left:2505px;top:168px;overflow:visible" width="14" height="8" viewBox="0 0 14 8"><path d="M0,0 H14 L7,8 Z" fill="#000"/></svg>
<svg style="left:2534.5px;top:164.5px;overflow:visible" width="14" height="13" viewBox="0 0 14 13"><path d="M1,1 L13,12 M13,1 L1,12" stroke="#000" stroke-width="2"/></svg>
<div style="left:283px;top:189px;width:2276px;height:1096px;background:#d8a8c0;"></div>
<div style="left:283px;top:188px;width:1px;height:1097px;background:#c8a0b4;"></div>
<div style="left:286px;top:191px;width:2269px;height:1090px;background:#fff;border-left:3px solid #7c7c7c;border-top:3px solid #7c7c7c"></div>
<div style="left:289px;top:194px;width:117px;height:1059px;background:#e8e8e8;"></div>
<div style="left:406px;top:194px;width:22px;height:1059px;background:repeating-conic-gradient(#ececec 0 25%,#fafafa 0 50%) 0 0/2px 2px;"></div>
<div style="left:289px;top:1253px;width:2266px;height:28px;background:#f0f0f0;"></div>
<div style="left:315.5px;top:1264.5px;width:1564px;height:3px;background:#8c8c8c;"></div>
<div style="left:429px;top:590px;width:2126px;height:33px;background:#e1fce5;"></div>
<div style="left:512px;top:590px;width:115.5px;height:33px;background:#8ac8f8;"></div>
<svg style="left:409.8px;top:632.6px;overflow:visible" width="16" height="15.5" viewBox="0 0 16 15.5"><rect x="0.7" y="0.7" width="14.3" height="14" fill="#fff" stroke="#8a8a8a" stroke-width="1.3"/><path d="M3.5,7.7 H12" stroke="#666" stroke-width="1.5"/></svg>
<div style="left:417px;top:648px;width:1.3px;height:452px;background:#8a8a8a;"></div>
<div style="left:417px;top:1099px;width:9px;height:1.3px;background:#8a8a8a;"></div>
<div class="code" style="left:289px;top:194px;width:2266px;height:1059px;color:#000">
<div class="ln" style="top:0px">1</div>
<div class="cl" style="top:0px"><span class="pp">#include</span> <span class="st">&lt;REGX52.H&gt;</span></div>
<div class="ln" style="top:33px">2</div>
<div class="cl" style="top:33px"><span class="pp">#include</span> <span class="st">"DELAY.H"</span></div>
<div class="ln" style="top:66px">3</div>
<div class="ln" style="top:99px">4</div>
<div class="cl" style="top:99px"><span class="pp">#define</span> uchar <span class="kw">unsigned char</span></div>
<div class="ln" style="top:132px">5</div>
<div class="cl" style="top:132px"><span class="pp">#define</span> uint <span class="kw">unsigned int</span></div>
<div class="ln" style="top:165px">6</div>
<div class="ln" style="top:198px">7</div>
<div class="cl" style="top:198px"><span class="sb">sbit</span> WE=P2^<span class="nu">7</span>;</div>
<div class="ln" style="top:231px">8</div>
<div class="cl" style="top:231px"><span class="sb">sbit</span> DU=P2^<span class="nu">6</span>;</div>
<div class="ln" style="top:264px">9</div>
<div class="ln" style="top:297px">10</div>
<div class="cl" style="top:297px">uchar number[]={<span class="nu">0x3F</span>,<span class="nu">0x06</span>,<span class="nu">0x5B</span>,<span class="nu">0x4F</span>,<span class="nu">0x66</span>,<span class="nu">0x6D</span>,<span class="nu">0x7D</span>,<span class="nu">0x07</span>,<span class="nu">0x7F</span>,<span class="nu">0x6F</span>,<span class="nu">0x77</span>,<span class="nu">0x7C</span>,<span class="nu">0x39</span>,<span class="nu">0x5E</span>,<span class="nu">0x79</span>,<span class="nu">0x71</span>,};</div>
<div class="ln" style="top:330px">11</div>
<div class="ln" style="top:363px">12</div>
<div class="ln" style="top:396px">13</div>
<div class="cl" style="top:396px"><span class="kw">void</span> Nixie()</div>
<div class="ln" style="top:429px">14</div>
<div class="cl" style="top:429px">{</div>
<div class="ln" style="top:462px">15</div>
<div class="ln" style="top:495px">16</div>
<div class="cl" style="top:495px">    P0=<span class="nu">0</span>;</div>
<div class="ln" style="top:528px">17</div>
<div class="cl" style="top:528px">    WE=<span class="nu">1</span>;</div>
<div class="ln" style="top:561px">18</div>
<div class="cl" style="top:561px">    P0=<span class="nu">0XFE</span>;</div>
<div class="ln" style="top:594px">19</div>
<div class="cl" style="top:594px">    WE=<span class="nu">0</span>;</div>
<div class="ln" style="top:627px">20</div>
<div class="cl" style="top:627px">    DELAY(<span class="nu">20</span>);</div>
<div class="ln" style="top:660px">21</div>
<div class="ln" style="top:693px">22</div>
<div class="cl" style="top:693px">    P0=<span class="nu">0</span>;</div>
<div class="ln" style="top:726px">23</div>
<div class="cl" style="top:726px">    DU=<span class="nu">1</span>;</div>
<div class="ln" style="top:759px">24</div>
<div class="cl" style="top:759px">    P0=<span class="nu">0x3F</span>;</div>
<div class="ln" style="top:792px">25</div>
<div class="cl" style="top:792px">    DU=<span class="nu">0</span>;</div>
<div class="ln" style="top:825px">26</div>
<div class="cl" style="top:825px">    DELAY(<span class="nu">20</span>);</div>
<div class="ln" style="top:858px">27</div>
<div class="ln" style="top:891px">28</div>
<div class="cl" style="top:891px">}</div>
</div>
<div style="left:1px;top:1285px;width:2558px;height:6px;background:#fff;"></div>
<div style="left:1px;top:1292px;width:2558px;height:27.5px;background:linear-gradient(#bfcddb,#d6e4f1);"></div>
<span id="f46" class="t" style="left:6.5px;top:1298px;font-size:17px;line-height:20px;color:#1e1e1e;font-weight:normal;font-family:'Liberation Sans',sans-serif;transform:scaleX(1.0624);transform-origin:0 0;">Build Output</span>
<svg style="left:2513px;top:1300px;overflow:visible" width="11" height="13" viewBox="0 0 11 13"><path d="M2.5,0.8 H8.5 V7 H10.5 V8.6 H0.5 V7 H2.5 Z" fill="#000"/><path d="M5.5,8 V12.5" stroke="#000" stroke-width="1.6"/><path d="M4,1.5 V7" stroke="#fff" stroke-width="0.8"/></svg>
<div style="left:2537px;top:1297.5px;width:18px;height:18px;background:#cc4a4a;"></div>
<svg style="left:2540px;top:1300.5px;overflow:visible" width="12" height="12" viewBox="0 0 12 12"><path d="M2.5,2.5 L9.5,9.5 M9.5,2.5 L2.5,9.5" stroke="#fff" stroke-width="2.2"/></svg>
<div style="left:1px;top:1321.5px;width:2558px;height:178px;background:#fff;border-left:3px solid #6e6e6e;border-top:3px solid #6e6e6e"></div>
<div style="left:2534px;top:1324.5px;width:25px;height:149px;background:#f0f0f0;"></div>
<div style="left:2545px;top:1364px;width:2.5px;height:82px;background:#8a8a8a;"></div>
<div style="left:4px;top:1473.6px;width:2555px;height:25px;background:#f0f0f0;"></div>
<svg style="left:10px;top:1479px;overflow:visible" width="9" height="13" viewBox="0 0 9 13"><path d="M8,0.5 V12.5 L1,6.5 Z" fill="#a8a8a8"/></svg>
<svg style="left:2516px;top:1479px;overflow:visible" width="9" height="13" viewBox="0 0 9 13"><path d="M1,0.5 V12.5 L8,6.5 Z" fill="#a8a8a8"/></svg>
<div class="bo" style="left:7px;top:1326px;width:2520px;height:146px">
<div style="left:0;top:0px">compiling main.c...</div>
<div style="left:0;top:24px">linking...</div>
<div style="left:0;top:48px">Program Size: data=71.0 xdata=0 code=505</div>
<div style="left:0;top:72px">creating hex file from ".\Objects\<span style="position:static;display:inline;font-size:20px;letter-spacing:4px;font-weight:normal">红外</span>"...</div>
<div style="left:0;top:96px">".\Objects\<span style="position:static;display:inline;font-size:20px;letter-spacing:4px;font-weight:normal">红外</span>" - 0 Error(s), 0 Warning(s).</div>
<div style="left:0;top:120px">Build Time Elapsed:  00:00:00</div>
</div>
<div style="left:0px;top:1497px;width:2560px;height:31px;background:#f0f0f0;"></div>
<div style="left:0px;top:1497.5px;width:2560px;height:1px;background:#d8d8d8;"></div>
<div style="left:0px;top:1499px;width:2560px;height:1px;background:#fff;"></div>
<div style="left:0px;top:1500.5px;width:2560px;height:1px;background:#d8d8d8;"></div>
<div style="left:0px;top:1497px;width:1px;height:31px;background:#9a9a9a;"></div>
<div style="left:1781px;top:1502px;width:1px;height:26px;background:#d0d0d0;"></div>
<div style="left:2009px;top:1502px;width:1px;height:26px;background:#d0d0d0;"></div>
<div style="left:2197px;top:1502px;width:1px;height:26px;background:#d0d0d0;"></div>
<div style="left:2336.5px;top:1502px;width:1px;height:26px;background:#d0d0d0;"></div>
<div style="left:2376px;top:1502px;width:1px;height:26px;background:#d0d0d0;"></div>
<div style="left:2423.7px;top:1502px;width:1px;height:26px;background:#d0d0d0;"></div>
<div style="left:2470.8px;top:1502px;width:1px;height:26px;background:#d0d0d0;"></div>
<div style="left:2513.7px;top:1502px;width:1px;height:26px;background:#d0d0d0;"></div>
<span id="f47" class="t" style="left:1789px;top:1507px;font-size:17px;line-height:20px;color:#111;font-weight:normal;font-family:'Liberation Sans',sans-serif;transform:scaleX(1.0205);transform-origin:0 0;">Simulation</span>
<span id="f48" class="t" style="left:2204.7px;top:1507px;font-size:17px;line-height:20px;color:#111;font-weight:normal;font-family:'Liberation Sans',sans-serif;transform:scaleX(0.9025);transform-origin:0 0;">L:13 C:6</span>
<span id="f49" class="t" style="left:2343.6px;top:1507px;font-size:17px;line-height:20px;color:#8a8a8a;font-weight:normal;font-family:'Liberation Sans',sans-serif;transform:scaleX(0.8579);transform-origin:0 0;">CAP</span>
<span id="f50" class="t" style="left:2383px;top:1507px;font-size:17px;line-height:20px;color:#111;font-weight:normal;font-family:'Liberation Sans',sans-serif;transform:scaleX(0.9814);transform-origin:0 0;">NUM</span>
<span id="f51" class="t" style="left:2431px;top:1507px;font-size:17px;line-height:20px;color:#8a8a8a;font-weight:normal;font-family:'Liberation Sans',sans-serif;transform:scaleX(0.7937);transform-origin:0 0;">SCRL</span>
<span id="f52" class="t" style="left:2477px;top:1507px;font-size:17px;line-height:20px;color:#8a8a8a;font-weight:normal;font-family:'Liberation Sans',sans-serif;transform:scaleX(0.9228);transform-origin:0 0;">OVR</span>
<span id="f53" class="t" style="left:2520px;top:1507px;font-size:17px;line-height:20px;color:#8a8a8a;font-weight:normal;font-family:'Liberation Sans',sans-serif;transform:scaleX(0.9986);transform-origin:0 0;">R/W</span>
<div style="left:0px;top:1528px;width:2560px;height:13px;background:#6cc2cc;"></div>
<div style="left:0px;top:1528px;width:2560px;height:1.5px;background:#6a9ca2;"></div>
<svg style="left:45px;top:1536px;overflow:visible" width="24" height="10" viewBox="0 0 24 10"><circle cx="12.4" cy="11" r="10" fill="#c8261a"/></svg>
</body></html>
